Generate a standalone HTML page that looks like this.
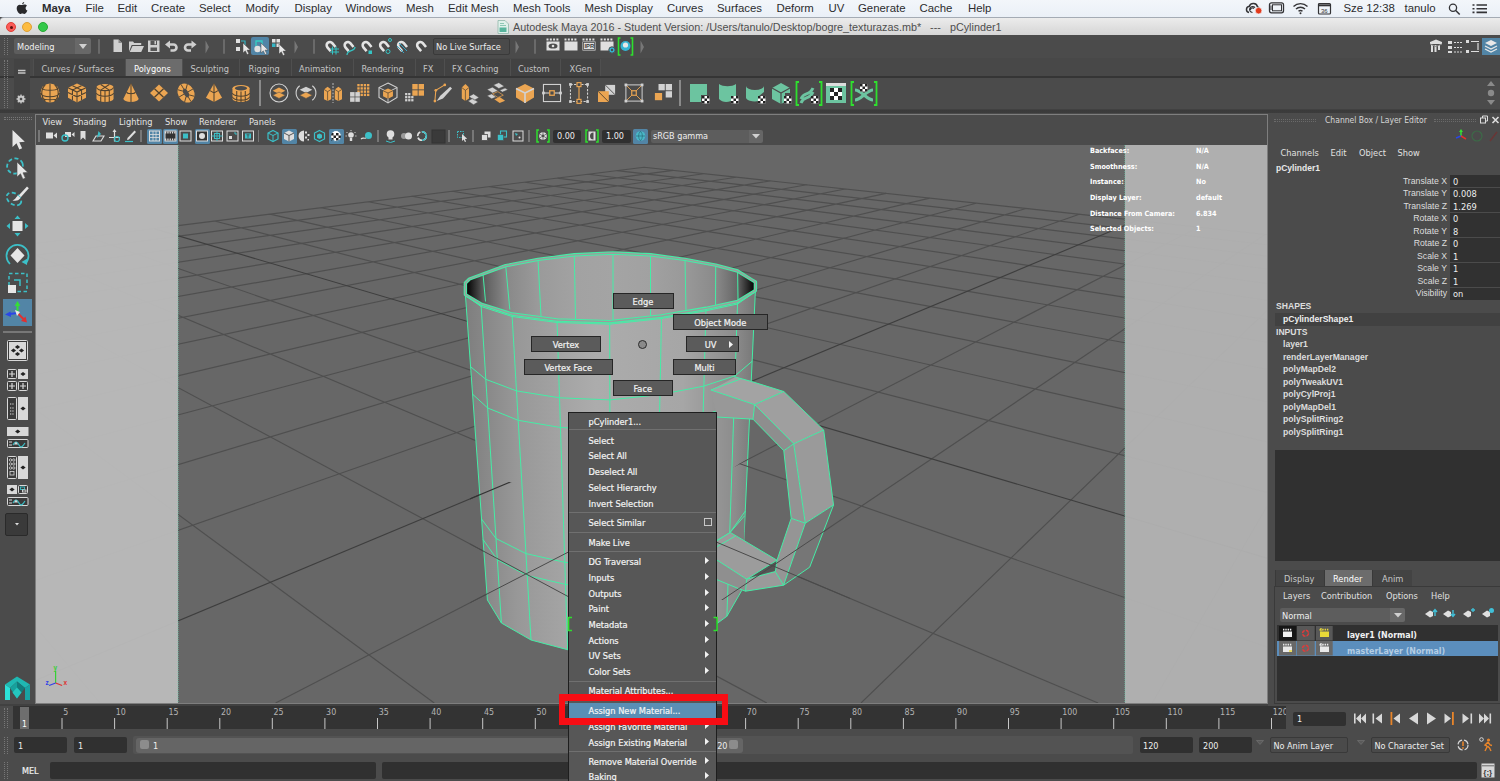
<!DOCTYPE html>
<html lang="en"><head><meta charset="utf-8"><title>Autodesk Maya 2016</title>
<style>html,body{margin:0;padding:0;}
body{width:1500px;height:781px;overflow:hidden;background:#4b4b4b;position:relative;font-family:"DejaVu Sans Condensed","DejaVu Sans","Liberation Sans",sans-serif;font-size:9.2px;color:#d8d8d8;}
.a{position:absolute;}
.t{position:absolute;white-space:nowrap;line-height:1;}
.mb{position:absolute;left:0;top:0;width:1500px;height:17px;background:linear-gradient(#f3f6fa,#eaf0f7);font-family:"Liberation Sans",sans-serif;font-size:11.4px;color:#2c2c2e;}
.mb .t{top:3px;}
.tb{position:absolute;left:0;top:17px;width:1500px;height:18px;background:linear-gradient(#ececec,#d5d5d5);border-top:1px solid #a4abb4;box-sizing:border-box;border-radius:4px 0 0 0;}
.dot{position:absolute;width:10px;height:10px;border-radius:50%;top:4px;box-sizing:border-box;}
svg{position:absolute;overflow:visible;}
.hl{position:absolute;background:#5285a6;}
.fld{position:absolute;background:#303030;border-radius:2px;box-sizing:border-box;}
.tab{position:absolute;top:59px;height:17px;background:#424242;border-left:1px solid #4f4f4f;box-sizing:border-box;}
.tab .t{top:5px;color:#c4c4c4;font-size:9.2px;}
.grip{position:absolute;width:2px;border-left:1px dotted #777;border-right:1px dotted #777;}
.cm{position:absolute;font-size:9.2px;color:#f4f4f4;-webkit-text-stroke:0.2px #f4f4f4;}
.mm{position:absolute;-webkit-text-stroke:0.2px #f4f4f4;background:#5b5b5b;border:1px solid #262626;box-sizing:border-box;color:#f2f2f2;font-size:9.2px;text-align:center;line-height:15px;height:16px;}
.cb{font-family:"Liberation Sans",sans-serif;}
</style></head>
<body>
<div class="mb">
<svg style="left:16px;top:2px" width="12" height="13" viewBox="0 0 12 13"><path d="M8.200 0.100c0.100 1.100-0.900 2.300-2 2.300C6 1.300 7.100 0.200 8.200 0.100zM6.200 3c0.600 0 1.300-0.600 2.400-0.600 0.900 0 1.800 0.500 2.400 1.300-2 1.200-1.700 4.100 0.400 4.900-0.500 1.300-1.700 3.300-2.900 3.300-0.800 0-1.100-0.500-2.100-0.500s-1.400 0.500-2.100 0.500C2.600 11.900 0.700 8.800 0.700 6.300c0-2.300 1.500-3.600 3-3.600 1 0 1.800 0.500 2.500 0.300z" fill="#2a2a2c"/></svg>
<span class="t" style="left:42px;font-weight:bold;">Maya</span>
<span class="t" style="left:85.5px;">File</span>
<span class="t" style="left:117.5px;">Edit</span>
<span class="t" style="left:151px;">Create</span>
<span class="t" style="left:199px;">Select</span>
<span class="t" style="left:245.5px;">Modify</span>
<span class="t" style="left:294.5px;">Display</span>
<span class="t" style="left:345.5px;">Windows</span>
<span class="t" style="left:406px;">Mesh</span>
<span class="t" style="left:448px;">Edit Mesh</span>
<span class="t" style="left:513px;">Mesh Tools</span>
<span class="t" style="left:584.5px;">Mesh Display</span>
<span class="t" style="left:667px;">Curves</span>
<span class="t" style="left:717px;">Surfaces</span>
<span class="t" style="left:776.5px;">Deform</span>
<span class="t" style="left:828.5px;">UV</span>
<span class="t" style="left:858px;">Generate</span>
<span class="t" style="left:919.5px;">Cache</span>
<span class="t" style="left:968px;">Help</span>
<span class="t" style="left:1343.5px;">Sze 12:38</span>
<span class="t" style="left:1404.5px;">tanulo</span>
<svg style="left:1244px;top:2px" width="250" height="14" viewBox="0 0 250 14" fill="none" stroke="#333336" stroke-width="1.200"><path d="M5 10.500a3.200 3.200 0 0 1 0.300-6.300a4.300 4.300 0 0 1 8.200 0.600a2.800 2.800 0 0 1 1 4.500" stroke-width="1.500"/><path d="M8.500 10.500a3 3 0 1 1 2.500-4.800M6.500 8a2 2 0 0 1 3.500-1.500" stroke-width="1.200"/><circle cx="14.600" cy="8.700" r="3.300" fill="#e23a1c" stroke="#f0f4f9" stroke-width="0.700"/><rect x="25.500" y="0.800" width="14" height="10" rx="2" stroke-width="1.300"/><rect x="28.500" y="2.800" width="9" height="6" stroke-width="1"/><path d="M27 3.500v4.500" stroke-width="1"/><path d="M49.500 4.500a10 10 0 0 1 14 0M52 7a6.500 6.500 0 0 1 9 0M54.500 9.300a3 3 0 0 1 4 0" stroke-width="1.400"/><circle cx="56.500" cy="11.300" r="1" fill="#333336" stroke="none"/><rect x="74.500" y="1.500" width="12" height="10.500" rx="1" stroke-width="1.200"/><path d="M74.500 3.300h12" stroke-width="2"/><text x="77" y="10.500" font-size="6" font-family="Liberation Sans,sans-serif" fill="#333336" stroke="none">36</text><circle cx="209" cy="5.700" r="3.600" stroke-width="1.300"/><path d="M211.700 8.400l4 4.200" stroke-width="1.500"/><path d="M228.500 3h2M228.500 6.700h2M228.500 10.400h2" stroke-width="1.600"/><path d="M232.500 3h10.500M232.500 6.700h10.500M232.500 10.400h10.500" stroke-width="1.600"/></svg>
</div>
<div class="tb">
<div class="dot" style="left:6px;background:#fc5b57;border:0.5px solid #de4037"></div><div class="a" style="left:9.500px;top:7.500px;width:3px;height:3px;border-radius:50%;background:#5d0f0b"></div>
<div class="dot" style="left:21.500px;background:#fdbc40;border:0.5px solid #dea034"></div>
<div class="dot" style="left:37.500px;background:#34c84a;border:0.5px solid #27aa35"></div>
<svg style="left:497px;top:2px" width="12" height="14" viewBox="0 0 12 14"><path d="M1 0.500h7l3.500 3.500v9.500h-10.500z" fill="#dff0ea" stroke="#8fb8aa" stroke-width="0.800"/><path d="M3 3.500h4M3 5.500h6" stroke="#8cc8b4" stroke-width="1"/><rect x="2.500" y="7.500" width="7" height="4.500" fill="#58b49c"/></svg><span class="t" style="left:513px;top:4px;font-family:'Liberation Sans',sans-serif;font-size:10.8px;color:#4e4e4e">Autodesk Maya 2016 - Student Version: /Users/tanulo/Desktop/bogre_texturazas.mb*&nbsp;&nbsp; ---&nbsp;&nbsp; pCylinder1</span>
</div>
<div class="a" style="left:0;top:35px;width:1500px;height:23px;background:#4b4b4b"></div>
<div class="grip" style="left:4px;top:38px;height:17px"></div><div class="a" style="left:14px;top:38px;width:61px;height:16px;background:#5d5d5d;border-radius:2px 0 0 2px"></div><div class="a" style="left:75px;top:38px;width:16px;height:16px;background:#686868;border-radius:0 2px 2px 0"></div><span class="t" style="left:17px;top:41.500px;color:#f0f0f0;font-size:9.2px">Modeling</span><svg style="left:79px;top:44px" width="8" height="5" viewBox="0 0 8 5"><path d="M0 0h8l-4 5z" fill="#d0d0d0"/></svg>
<div class="a" style="left:98px;top:39px;width:2px;height:15px;background:#6a6a6a;border-radius:1px"></div><svg style="left:108px;top:36px" width="100" height="22" viewBox="108 36 100 22" fill="#cfcfcf"><path d="M113.500 39.500h5l3.500 3.500v9h-8.500z"/><path d="M118.500 39.500v3.500h3.500z" fill="#8a8a8a"/><path d="M129 41.500h4l1.200 1.500h7v2h-9.500l-2.700 6.500z"/><path d="M132.500 46h11.500l-2.800 6h-11.500z"/><path d="M148 40.500h11.500v11.500h-11.500z"/><rect x="150.500" y="40.500" width="6.500" height="4.500" fill="#555"/><rect x="154.500" y="41" width="1.500" height="3.300" fill="#cfcfcf"/><rect x="150.500" y="47.500" width="6.500" height="3.500" fill="#555"/><path d="M165 44.500l5-4v2.700h3.500a4.300 4.300 0 0 1 0 8.600h-3v-2.600h3a1.700 1.700 0 0 0 0-3.400h-3.500v2.700z"/><path d="M196.500 44.500l-5-4v2.700h-3.500a4.300 4.300 0 0 0 0 8.600h3v-2.600h-3a1.700 1.700 0 0 1 0-3.400h3.500v2.700z"/></svg>
<svg style="left:204.5px;top:39.5px" width="5" height="14" viewBox="0 0 5 14"><path d="M0.500 0.500l3.500 6.500l-3.500 6.500z" fill="#777"/></svg><div class="a" style="left:223px;top:39px;width:2px;height:15px;background:#6a6a6a;border-radius:1px"></div><div class="hl" style="left:251px;top:37px;width:18px;height:18px;border-radius:2px"></div><svg style="left:232px;top:36px" width="60" height="22" viewBox="232 36 60 22"><rect x="236" y="39" width="4" height="4" fill="#e0e0e0"/><rect x="236" y="47" width="4" height="4" fill="#e0e0e0"/><path d="M241 41h4v4" stroke="#35b5c4" fill="none" stroke-width="1.200"/><path d="M243 43l0 10l2.3 -2.2l1.8 3.8l1.7 -0.8l-1.8 -3.7l3.2 0z" fill="#e8e8e8" stroke="#4b4b4b" stroke-width="0.500"/><circle cx="257.500" cy="49" r="3.200" fill="#e0e0e0"/><path d="M256 46v-5h6v4" stroke="#35d0c4" fill="none" stroke-width="1.300"/><path d="M261 43l0 10l2.3 -2.2l1.8 3.8l1.7 -0.8l-1.8 -3.7l3.2 0z" fill="#e8e8e8" stroke="#4b4b4b" stroke-width="0.500"/><rect x="272" y="39" width="3.500" height="3.500" fill="#e0e0e0"/><rect x="276.500" y="39" width="3.500" height="3.500" fill="#e0e0e0"/><rect x="272" y="43.500" width="3.500" height="3.500" fill="#35b5c4"/><rect x="276.500" y="43.500" width="3.500" height="3.500" fill="#e0e0e0"/><path d="M279 44l0 10l2.3 -2.2l1.8 3.8l1.7 -0.8l-1.8 -3.7l3.2 0z" fill="#e8e8e8" stroke="#4b4b4b" stroke-width="0.500"/></svg>
<svg style="left:294px;top:39.5px" width="5" height="14" viewBox="0 0 5 14"><path d="M0.500 0.500l3.500 6.500l-3.500 6.500z" fill="#777"/></svg><div class="a" style="left:312.5px;top:39px;width:2px;height:15px;background:#6a6a6a;border-radius:1px"></div><svg style="left:322px;top:36px" width="110" height="22" viewBox="322 36 110 22"><g transform="translate(330.5 46) rotate(-40)"><path d="M-4.500 4v-5a4.500 4.500 0 0 1 9 0v5h-2.600v-5a1.900 1.900 0 0 0-3.800 0v5z" fill="#e4e4e4"/></g><path d="M330 49h9M330 52h9M332.500 46.500v8M336 46.500v8" stroke="#35c4c4" stroke-width="1"/><g transform="translate(348.5 46) rotate(-40)"><path d="M-4.500 4v-5a4.500 4.500 0 0 1 9 0v5h-2.600v-5a1.900 1.900 0 0 0-3.800 0v5z" fill="#e4e4e4"/></g><path d="M347 55c0-6 8-3 8-8" stroke="#35c4c4" stroke-width="1.300" fill="none"/><g transform="translate(366.5 46) rotate(-40)"><path d="M-4.500 4v-5a4.500 4.500 0 0 1 9 0v5h-2.600v-5a1.900 1.900 0 0 0-3.800 0v5z" fill="#e4e4e4"/></g><rect x="368.500" y="50.500" width="3.500" height="3.500" fill="#35c4c4"/><g transform="translate(384 46) rotate(-40)"><path d="M-4.500 4v-5a4.500 4.500 0 0 1 9 0v5h-2.600v-5a1.900 1.900 0 0 0-3.800 0v5z" fill="#e4e4e4"/></g><circle cx="388" cy="51.500" r="2" fill="none" stroke="#35c4c4"/><circle cx="390" cy="40" r="1.500" fill="none" stroke="#35c4c4"/><g transform="translate(402 46) rotate(-40)"><path d="M-4.500 4v-5a4.500 4.500 0 0 1 9 0v5h-2.600v-5a1.900 1.900 0 0 0-3.800 0v5z" fill="#e4e4e4"/></g><path d="M399 43l8 8M397 46l7 7" stroke="#35a4c4" stroke-width="1"/><g transform="translate(421 46) rotate(-40)"><path d="M-4.500 4v-5a4.500 4.500 0 0 1 9 0v5h-2.600v-5a1.900 1.900 0 0 0-3.800 0v5z" fill="#e4e4e4"/></g></svg>
<div class="a" style="left:432.500px;top:38px;width:77px;height:17px;background:#4a4a4a;border:1px solid #3a3a3a;box-sizing:border-box;border-radius:2px"></div><span class="t" style="left:436px;top:42px;color:#eee;font-size:9.2px">No Live Surface</span>
<svg style="left:515px;top:39.5px" width="5" height="14" viewBox="0 0 5 14"><path d="M0.500 0.500l3.500 6.500l-3.500 6.500z" fill="#777"/></svg><div class="a" style="left:534px;top:39px;width:2px;height:15px;background:#6a6a6a;border-radius:1px"></div><svg style="left:544px;top:36px" width="100" height="22" viewBox="544 36 100 22"><rect x="546.5" y="41.500" width="13" height="9" fill="#e0e0e0"/><path d="M546.5 39.500h13" stroke="#e0e0e0" stroke-width="2.200" stroke-dasharray="2 1.300"/><ellipse cx="553" cy="46" rx="4.500" ry="2.600" fill="#4b4b4b"/><circle cx="553" cy="46" r="1.300" fill="#e0e0e0"/><rect x="564.5" y="41.500" width="13" height="9" fill="#e0e0e0"/><path d="M564.5 39.500h13" stroke="#e0e0e0" stroke-width="2.200" stroke-dasharray="2 1.300"/><rect x="582.5" y="41.500" width="13" height="9" fill="#e0e0e0"/><path d="M582.5 39.500h13" stroke="#e0e0e0" stroke-width="2.200" stroke-dasharray="2 1.300"/><rect x="583.500" y="42.500" width="11" height="7" fill="none" stroke="#4b4b4b" stroke-width="0.800"/><text x="584.500" y="48.300" font-size="5.800" font-family="Liberation Sans,sans-serif" font-weight="bold" fill="#3a3a3a">IPR</text><rect x="600.5" y="41.500" width="13" height="9" fill="#e0e0e0"/><path d="M600.5 39.500h13" stroke="#e0e0e0" stroke-width="2.200" stroke-dasharray="2 1.300"/><circle cx="612" cy="50" r="3.200" fill="#35b5d4" stroke="#4b4b4b"/><circle cx="612" cy="50" r="1.200" fill="#4b4b4b"/><path d="M620.500 38h-2v17h2M630.500 38h2v17h-2" stroke="#2ee02e" stroke-width="1.600" fill="none"/><circle cx="625.500" cy="46" r="5" fill="#35b5d4"/><circle cx="625.500" cy="45" r="2.600" fill="#e8e8e8"/></svg>
<svg style="left:640px;top:39.5px" width="5" height="14" viewBox="0 0 5 14"><path d="M0.500 0.500l3.500 6.500l-3.500 6.500z" fill="#777"/></svg><div class="hl" style="left:1482px;top:38px;width:18px;height:17px"></div><svg style="left:1426px;top:36px" width="74" height="22" viewBox="1426 36 74 22" fill="#dcdcdc"><path d="M1430 42l6-2.500 6 2.500v2h-12zM1431 45h2v7h-2zM1434.500 45h2v7h-2zM1438 45h2v5h-2z"/><path d="M1430 44l6 2.500 6-2.500" stroke="#888" fill="none"/><path d="M1448 41h4v3h-4zM1448 46h4v3h-4zM1448 51h4v2h-4z"/><path d="M1454 42.500h8M1454 47.500h8M1454 52h8" stroke="#dcdcdc" stroke-dasharray="2 1"/><path d="M1466 40h3v3h-3zM1466 50h3v3h-3z"/><path d="M1471 41.500h8M1471 51.500h8M1478 43v7" stroke="#dcdcdc" stroke-width="1.200" fill="none"/><path d="M1491 40l6 3-6 3-6-3z" fill="#e8e8e8"/><path d="M1485 46l6 3 6-3M1485 49l6 3 6-3" stroke="#e8e8e8" fill="none" stroke-width="1.200"/></svg>
<div class="a" style="left:0;top:58px;width:1500px;height:19px;background:#484848"></div><div class="a" style="left:0;top:76px;width:1500px;height:1.500px;background:#353535"></div><div class="a" style="left:0;top:108.500px;width:1500px;height:4.500px;background:linear-gradient(#444,#3a3a3a 40%,#3c3c3c)"></div><div class="grip" style="left:4px;top:60px;height:48px"></div><div class="tab" style="left:33px;width:92px;"><span class="t" style="left:7.5px;">Curves / Surfaces</span></div>
<div class="tab" style="left:125px;width:57px;background:#6c6c6c;"><span class="t" style="left:8px;color:#fff;">Polygons</span></div>
<div class="tab" style="left:182px;width:57px;"><span class="t" style="left:7.5px;">Sculpting</span></div>
<div class="tab" style="left:239px;width:52px;"><span class="t" style="left:8.5px;">Rigging</span></div>
<div class="tab" style="left:291px;width:62px;"><span class="t" style="left:7px;">Animation</span></div>
<div class="tab" style="left:353px;width:62px;"><span class="t" style="left:7.5px;">Rendering</span></div>
<div class="tab" style="left:415px;width:29px;"><span class="t" style="left:7px;">FX</span></div>
<div class="tab" style="left:444px;width:66px;"><span class="t" style="left:7px;">FX Caching</span></div>
<div class="tab" style="left:510px;width:50px;"><span class="t" style="left:7px;">Custom</span></div>
<div class="tab" style="left:560px;width:40px;"><span class="t" style="left:8.5px;">XGen</span></div>
<div class="a" style="left:600px;top:59px;width:1px;height:17px;background:#4f4f4f"></div><div class="a" style="left:14px;top:59px;width:16px;height:50px;background:#434343"></div><svg style="left:14px;top:60px" width="16" height="48" viewBox="14 60 16 48"><path d="M18 70.500h7.500M18 73h7.500" stroke="#c8c8c8" stroke-width="1.600"/><circle cx="21" cy="99" r="2.700" fill="none" stroke="#c8c8c8" stroke-width="1.600"/><path d="M21 94.500v9M16.500 99h9M17.800 95.800l6.400 6.400M24.200 95.800l-6.400 6.400" stroke="#c8c8c8" stroke-width="1.300"/><circle cx="21" cy="99" r="1.300" fill="#4b4b4b"/></svg>
<svg style="left:1485px;top:80px" width="12" height="28" viewBox="0 0 12 28" fill="#8a8a8a"><path d="M6 1l4 5h-8z"/><circle cx="6" cy="13" r="3.200"/><path d="M6 25l4-5h-8z"/></svg>
<svg style="left:37.5px;top:81px" width="24" height="24" viewBox="-12 -12 24 24"><g transform="scale(0.95)"><circle r="10" fill="#eba552"/><path d="M-10 0a10 4 0 0 0 20 0M-8.600-5a9 3 0 0 0 17.200 0M-8.600 5a9 3 0 0 0 17.200 0M0-10v20M-5-8.600a12 12 0 0 0 0 17.200M5-8.600a12 12 0 0 1 0 17.200" stroke="#50422f" fill="none" stroke-width="1.100"/></g></svg>
<svg style="left:64.5px;top:81px" width="24" height="24" viewBox="-12 -12 24 24"><g transform="scale(0.95)"><path d="M0-10l9.500 4.500v10.500l-9.500 5l-9.500-5v-10.500z" fill="#eba552"/><path d="M-9.500-5.500l9.500 4.500l9.500-4.500M0-1v11M-9.500-0.500l9.500 4.500 9.500-4.500M-4.700-7.700l9.500 4.500v10.500M4.700-7.700l-9.500 4.500v10.500" stroke="#50422f" fill="none" stroke-width="1.100"/></g></svg>
<svg style="left:92.5px;top:81px" width="24" height="24" viewBox="-12 -12 24 24"><g transform="scale(0.95)"><path d="M-9-6a9 3.500 0 0 1 18 0v12a9 3.500 0 0 1-18 0z" fill="#eba552"/><path d="M-9-6a9 3.500 0 0 0 18 0M-9 0a9 3.500 0 0 0 18 0M-4.500-3v12.500M4.500-3v12.500M0-2.500v12M-4.500-9l9 6M4.500-9l-9 6" stroke="#50422f" fill="none" stroke-width="1.100"/></g></svg>
<svg style="left:119px;top:81px" width="24" height="24" viewBox="-12 -12 24 24"><g transform="scale(0.95)"><path d="M0-10l8 16a8 3.500 0 0 1-16 0z" fill="#eba552"/><path d="M0-10v19.500M-4.500-1a4.500 1.800 0 0 0 9 0" stroke="#50422f" fill="none" stroke-width="1.100"/></g></svg>
<svg style="left:146.5px;top:81px" width="24" height="24" viewBox="-12 -12 24 24"><g transform="scale(0.95)"><path d="M0-9l9.500 9-9.500 9-9.500-9z" fill="#eba552"/><path d="M-4.750-4.500l9.500 9M4.750-4.500l-9.500 9" stroke="#50422f" fill="none" stroke-width="1.300"/></g></svg>
<svg style="left:174px;top:81px" width="24" height="24" viewBox="-12 -12 24 24"><g transform="scale(0.95)"><g transform="rotate(-30)"><ellipse rx="8.500" ry="10.500" fill="#eba552"/><ellipse rx="2.500" ry="5" fill="#4b4b4b"/><path d="M-8.500 0h6M2.500 0h6M0-10.500v5.500M0 5v5.500M-6-7.500l4 4M6-7.500l-4 4M-6 7.500l4-4M6 7.500l-4-4" stroke="#50422f" stroke-width="0.900"/></g></g></svg>
<svg style="left:201.5px;top:81px" width="24" height="24" viewBox="-12 -12 24 24"><g transform="scale(0.95)"><path d="M0-10l8.500 15-8.500 4.500-8.500-4.500z" fill="#eba552"/><path d="M0-10v19.500M-4.200-2.500l4.200 2.500 4.200-2.500" stroke="#50422f" fill="none" stroke-width="1.100"/></g></svg>
<svg style="left:229px;top:81px" width="24" height="24" viewBox="-12 -12 24 24"><g transform="scale(0.95)"><path d="M-9-5a9 3.500 0 0 1 18 0v11a9 3.500 0 0 1-18 0z" fill="#eba552"/><ellipse cy="-5" rx="6.500" ry="2.300" fill="#4b4b4b"/><path d="M-9 0a9 3.500 0 0 0 18 0M-9 4a9 3.500 0 0 0 18 0M-4.500-2v11.500M4.500-2v11.500M0-1.500v11" stroke="#50422f" fill="none" stroke-width="1.100"/></g></svg>
<div class="a" style="left:259px;top:80px;width:2px;height:26px;background:#8a8a8a"></div><svg style="left:266.5px;top:81px" width="24" height="24" viewBox="-12 -12 24 24"><g transform="scale(0.9)"><circle r="10" fill="none" stroke="#d2d2d2" stroke-width="1.200"/><path d="M0-6l7 3.500-7 3.500-7-3.500z" fill="#eba552"/><path d="M0-1l7 3.500-7 3.500-7-3.500z" fill="#eba552" stroke="#4b4b4b" stroke-width="0.600"/></g></svg>
<svg style="left:293.5px;top:81px" width="24" height="24" viewBox="-12 -12 24 24"><g transform="scale(0.9)"><path d="M-7-8a10 10 0 0 0 0 16M7-8a10 10 0 0 1 0 16" fill="none" stroke="#d2d2d2" stroke-width="1.200"/><path d="M0-7l7 3.500-7 3.500-7-3.500z" fill="#d2d2d2"/><path d="M0-1l7 3.500-7 3.500-7-3.500z" fill="#eba552" stroke="#4b4b4b" stroke-width="0.600"/></g></svg>
<svg style="left:320.5px;top:81px" width="24" height="24" viewBox="-12 -12 24 24"><g transform="scale(0.9)"><path d="M-10-4l4-3 4 3v11l-4 2-4-2zM2-4l4-3 4 3v11l-4 2-4-2z" fill="#eba552"/><path d="M-10-4l4 2.500 4-2.500M-6-1.500v10M2-4l4 2.500 4-2.500M6-1.500v10" stroke="#50422f" fill="none" stroke-width="0.800"/><path d="M0-11v22" stroke="#d2d2d2" stroke-dasharray="2 1.500"/></g></svg>
<svg style="left:347.5px;top:81px" width="24" height="24" viewBox="-12 -12 24 24"><g transform="scale(0.9)"><g fill="#eba552"><rect x="-3" y="-10" width="2.600" height="2.600"/><rect x="-3" y="-6.4" width="2.600" height="2.600"/><rect x="-3" y="-2.8" width="2.600" height="2.600"/><rect x="-3" y="0.8" width="2.600" height="2.600"/><rect x="0.6" y="-10" width="2.600" height="2.600"/><rect x="0.6" y="-6.4" width="2.600" height="2.600"/><rect x="0.6" y="-2.8" width="2.600" height="2.600"/><rect x="0.6" y="0.8" width="2.600" height="2.600"/><rect x="4.2" y="-10" width="2.600" height="2.600"/><rect x="4.2" y="-6.4" width="2.600" height="2.600"/><rect x="4.2" y="-2.8" width="2.600" height="2.600"/><rect x="4.2" y="0.8" width="2.600" height="2.600"/><rect x="7.8" y="-10" width="2.600" height="2.600"/><rect x="7.8" y="-6.4" width="2.600" height="2.600"/><rect x="7.8" y="-2.8" width="2.600" height="2.600"/><rect x="7.8" y="0.8" width="2.600" height="2.600"/></g><g fill="#d2d2d2"><rect x="-11" y="-1" width="5" height="5"/><rect x="-11" y="4.8" width="5" height="5"/><rect x="-5.2" y="-1" width="5" height="5"/><rect x="-5.2" y="4.8" width="5" height="5"/></g></g></svg>
<svg style="left:375.5px;top:81px" width="24" height="24" viewBox="-12 -12 24 24"><g transform="scale(0.9)"><path d="M0-11l10 5v11l-10 6l-10-6v-11z" fill="none" stroke="#d2d2d2" stroke-width="1.200"/><path d="M0-1l10-5M0-1l-10-5M0-1v12" stroke="#d2d2d2" stroke-width="1"/><path d="M0-5l5.500 2.500v6l-5.500 3-5.500-3v-6z" fill="#eba552"/><path d="M-5.500-2.500l5.500 2.500 5.500-2.500M0 0v6.500" stroke="#50422f" fill="none" stroke-width="0.800"/></g></svg>
<svg style="left:402.5px;top:81px" width="24" height="24" viewBox="-12 -12 24 24"><g transform="scale(0.9)"><g fill="#eba552"><rect x="-3" y="-10" width="6" height="6"/><rect x="4" y="-10" width="6" height="6"/><rect x="-3" y="-3" width="6" height="6"/><rect x="4" y="-3" width="6" height="6"/></g><g fill="#d2d2d2"><rect x="-11" y="0" width="2.500" height="2.500"/><rect x="-11" y="3.4" width="2.500" height="2.500"/><rect x="-11" y="6.8" width="2.500" height="2.500"/><rect x="-7.6" y="0" width="2.500" height="2.500"/><rect x="-7.6" y="3.4" width="2.500" height="2.500"/><rect x="-7.6" y="6.8" width="2.500" height="2.500"/><rect x="-4.2" y="3.4" width="2.500" height="2.500"/><rect x="-4.2" y="6.8" width="2.500" height="2.500"/></g></g></svg>
<svg style="left:430.5px;top:81px" width="24" height="24" viewBox="-12 -12 24 24"><g transform="scale(0.9)"><path d="M-9 9l1-12 10-6" fill="none" stroke="#eba552" stroke-width="1.200"/><circle cx="-8" cy="-3" r="1.500" fill="#eba552"/><circle cx="2" cy="-9" r="1.500" fill="#eba552"/><circle cx="-9" cy="9" r="1.500" fill="#eba552"/><path d="M-7 9l4-6 11-10 2 2-10 11z" fill="#d2d2d2"/></g></svg>
<svg style="left:457px;top:81px" width="24" height="24" viewBox="-12 -12 24 24"><g transform="scale(0.9)"><path d="M-8-6l4-4 4 4v12l-4 3-4-3z" fill="#eba552"/><path d="M-8-6l4 3 4-3M-4-3v12" stroke="#50422f" fill="none" stroke-width="0.800"/><path d="M0 4l5-3 6 4-5 3zM-1 9l5-3 6 4-5 3z" fill="#d2d2d2" stroke="#4b4b4b" stroke-width="0.500"/></g></svg>
<svg style="left:485px;top:81px" width="24" height="24" viewBox="-12 -12 24 24"><g transform="scale(0.9)"><path d="M-4-9l6-2.500 6 4-6 2.500zM-11-4l6-2.500 6 4-6 2.500zM3-3l6-2.500 3 2-6 2.500z" fill="#d2d2d2" stroke="#4b4b4b" stroke-width="0.500"/><path d="M-5 1l6-2.500 6 4-6 2.500z" fill="#4b4b4b" stroke="#eba552" stroke-width="0.800"/><path d="M-3 7l6-2.500 6 4-6 2.500z" fill="#eba552"/><path d="M-11 3l5-2 5 3.500-5 2z" fill="#d2d2d2" stroke="#4b4b4b" stroke-width="0.500"/></g></svg>
<svg style="left:512.5px;top:81px" width="24" height="24" viewBox="-12 -12 24 24"><g transform="scale(0.9)"><path d="M0-10l10 5v10l-10 6l-10-6v-10z" fill="#eba552"/><path d="M0 0l10-5M0 0l-10-5M0 0v11" stroke="#d2d2d2" stroke-width="1.800"/></g></svg>
<svg style="left:539.5px;top:81px" width="24" height="24" viewBox="-12 -12 24 24"><g transform="scale(0.9)"><rect x="-9.500" y="-9.500" width="19" height="19" fill="none" stroke="#d2d2d2" stroke-width="1.200"/><path d="M-9.500 0h19" stroke="#d2d2d2" stroke-width="1.200"/><rect x="-11" y="-1.500" width="3" height="3" fill="#d2d2d2"/><rect x="8" y="-1.500" width="3" height="3" fill="#d2d2d2"/><rect x="-2.500" y="-2.500" width="5" height="5" fill="#4b4b4b" stroke="#eba552" stroke-width="1.400"/></g></svg>
<svg style="left:567px;top:81px" width="24" height="24" viewBox="-12 -12 24 24"><g transform="scale(0.9)"><rect x="-9.500" y="-9.500" width="19" height="19" fill="none" stroke="#d2d2d2" stroke-width="1.200" stroke-dasharray="2.500 1.500"/><path d="M0-9.500v19" stroke="#eba552" stroke-width="1.300"/><g fill="#d2d2d2"><rect x="-11" y="-11" width="3" height="3"/><rect x="8" y="-11" width="3" height="3"/><rect x="-11" y="8" width="3" height="3"/><rect x="8" y="8" width="3" height="3"/></g><rect x="-2.200" y="-11.500" width="4.400" height="4.400" fill="#4b4b4b" stroke="#eba552" stroke-width="1.300"/><rect x="-2.200" y="7.100" width="4.400" height="4.400" fill="#4b4b4b" stroke="#eba552" stroke-width="1.300"/></g></svg>
<svg style="left:595px;top:81px" width="24" height="24" viewBox="-12 -12 24 24"><g transform="scale(0.9)"><path d="M-2-9h11v11h-11z" fill="#d2d2d2"/><path d="M-2-9l11 11" stroke="#4b4b4b"/><path d="M-10-2h12v12h-12z" fill="#eba552"/><path d="M-10-2l12 12" stroke="#50422f" stroke-width="1"/></g></svg>
<svg style="left:622px;top:81px" width="24" height="24" viewBox="-12 -12 24 24"><g transform="scale(0.9)"><rect x="-9" y="-9" width="18" height="18" fill="none" stroke="#d2d2d2" stroke-width="1.100"/><path d="M-9-9l18 18M9-9l-18 18" stroke="#eba552" stroke-width="1"/><rect x="-2.500" y="-2.500" width="5" height="5" fill="#4b4b4b" stroke="#eba552" stroke-width="1.300"/><g fill="#d2d2d2"><rect x="-10.500" y="-10.500" width="3" height="3"/><rect x="7.500" y="-10.500" width="3" height="3"/><rect x="-10.500" y="7.500" width="3" height="3"/><rect x="7.500" y="7.500" width="3" height="3"/></g></g></svg>
<svg style="left:650.5px;top:81px" width="24" height="24" viewBox="-12 -12 24 24"><g transform="scale(0.9)"><g fill="#d2d2d2"><rect x="-5" y="-10" width="7" height="7"/><rect x="3" y="-10" width="7" height="7"/><rect x="3" y="-2" width="7" height="7"/></g><rect x="-9" y="0" width="8" height="8" fill="#eba552"/></g></svg>
<div class="a" style="left:679px;top:80px;width:2px;height:26px;background:#8a8a8a"></div><svg style="left:687px;top:81px" width="24" height="24" viewBox="-12 -12 24 24"><path d="M-9-9h17v11h-6v7h-11z" fill="#6cc4a0"/><g transform="translate(3 3)"><rect width="7.500" height="7.500" fill="#fff"/><path d="M0 0h2.500v2.500h-2.500zM5 0h2.500v2.500h-2.500zM2.500 2.500h2.500v2.500h-2.500zM0 5h2.500v2.500h-2.500zM5 5h2.500v2.500h-2.500z" fill="#222"/></g></svg>
<svg style="left:715.5px;top:81px" width="24" height="24" viewBox="-12 -12 24 24"><path d="M-9-9c4 3 13 3 17 0v12h-5v5c-5 2-9 1-12-2z" fill="#6cc4a0"/><g transform="translate(3 3)"><rect width="7.500" height="7.500" fill="#fff"/><path d="M0 0h2.500v2.500h-2.500zM5 0h2.500v2.500h-2.500zM2.500 2.500h2.500v2.500h-2.500zM0 5h2.500v2.500h-2.500zM5 5h2.500v2.500h-2.500z" fill="#222"/></g></svg>
<svg style="left:743px;top:81px" width="24" height="24" viewBox="-12 -12 24 24"><path d="M-9-7a9 4 0 0 0 18 0v6l-5 4v5a9 4 0 0 1-13-4z" fill="#6cc4a0"/><g transform="translate(3 3)"><rect width="7.500" height="7.500" fill="#fff"/><path d="M0 0h2.500v2.500h-2.500zM5 0h2.500v2.500h-2.500zM2.500 2.500h2.500v2.500h-2.500zM0 5h2.500v2.500h-2.500zM5 5h2.500v2.500h-2.500z" fill="#222"/></g></svg>
<svg style="left:769px;top:81px" width="24" height="24" viewBox="-12 -12 24 24"><path d="M0-10l9 5v5h-5v9l-4 2-9-5v-11z" fill="#6cc4a0"/><path d="M-9-5l9 5 9-5M0 0v11" stroke="#4b4b4b" fill="none" stroke-width="1.200"/><g transform="translate(3 3)"><rect width="7.500" height="7.500" fill="#fff"/><path d="M0 0h2.500v2.500h-2.500zM5 0h2.500v2.500h-2.500zM2.500 2.500h2.500v2.500h-2.500zM0 5h2.500v2.500h-2.500zM5 5h2.500v2.500h-2.500z" fill="#222"/></g></svg>
<svg style="left:797px;top:81px" width="24" height="24" viewBox="-12 -12 24 24"><path d="M-10-11h-2.500v23h2.500M10-11h2.500v23h-2.500" stroke="#2ee02e" stroke-width="1.800" fill="none"/><path d="M-8 6c3-8 8-2 12-11M-8 10c3-8 8-2 12-11" stroke="#6cc4a0" stroke-width="3" fill="none"/><g transform="translate(2 3)"><rect width="7.500" height="7.500" fill="#fff"/><path d="M0 0h2.500v2.500h-2.500zM5 0h2.500v2.500h-2.500zM2.500 2.500h2.500v2.500h-2.500zM0 5h2.500v2.500h-2.500zM5 5h2.500v2.500h-2.500z" fill="#222"/></g></svg>
<svg style="left:824px;top:81px" width="24" height="24" viewBox="-12 -12 24 24"><rect x="-10" y="-10" width="20" height="20" fill="#6cc4a0"/><rect x="-10" y="-10" width="20" height="3" fill="#ddd"/><g transform="translate(-6 -5)"><rect width="12" height="12" fill="#fff"/><path d="M0 0h4v4h-4zM8 0h4v4h-4zM4 4h4v4h-4zM0 8h4v4h-4zM8 8h4v4h-4z" fill="#222"/></g></svg>
<svg style="left:852px;top:81px" width="24" height="24" viewBox="-12 -12 24 24"><path d="M-10-11h-2.500v23h2.500M10-11h2.500v23h-2.500" stroke="#2ee02e" stroke-width="1.800" fill="none"/><path d="M-9-3c6 0 12 10 18 10M-9 7c6 0 12-10 18-10" stroke="#6cc4a0" stroke-width="3" fill="none"/><g transform="translate(-4 -9)"><rect width="7.500" height="7.500" fill="#fff"/><path d="M0 0h2.500v2.500h-2.500zM5 0h2.500v2.500h-2.500zM2.500 2.500h2.500v2.500h-2.500zM0 5h2.500v2.500h-2.500zM5 5h2.500v2.500h-2.500z" fill="#222"/></g></svg>
<div class="a" style="left:0;top:113px;width:35px;height:592px;background:#4b4b4b"></div><div class="a" style="left:4px;top:117px;width:28px;height:3px;border-top:1px dotted #777;border-bottom:1px dotted #777;box-sizing:border-box"></div><svg style="left:0;top:125px" width="36" height="210" viewBox="0 125 36 210"><path d="M12.500 130v17l4-3.700 2.800 6.200 2.800-1.300-2.800-6 5.500-0.400z" fill="#e6e6e6"/><ellipse cx="15" cy="166" rx="8" ry="7.500" fill="none" stroke="#3cc0c8" stroke-width="1.800" stroke-dasharray="4 2.500" transform="rotate(-25 15 166)"/><path d="M17 162v15l3.500-3.200 2.400 5.400 2.500-1.100-2.400-5.300 4.800-0.400z" fill="#e6e6e6" stroke="#4b4b4b" stroke-width="0.600"/><ellipse cx="14" cy="199" rx="8" ry="5.500" fill="none" stroke="#3cc0c8" stroke-width="1.800" stroke-dasharray="4 2.500" transform="rotate(35 14 199)"/><path d="M27 186.500l1.800 1.800-8 9-2-2z" fill="#e6e6e6"/><path d="M18 195.500l2.500 2.500c-2 3-5 3-8 2.500 3-1 3-3 5.500-5z" fill="#e6e6e6"/><rect x="12.500" y="221" width="10" height="10" fill="#e6e6e6"/><path d="M17.500 215.500l3 3.500h-6zM17.500 236.500l3-3.500h-6zM6.500 226l3.500-3v6zM28.500 226l-3.500-3v6z" fill="#3cc0c8"/><path d="M17.500 248l7 7.500-7 7.500-7-7.500z" fill="#e6e6e6"/><path d="M10 264a11 11 0 1 1 15.500-0.500" fill="none" stroke="#3cc0c8" stroke-width="1.700"/><path d="M27.500 258.500l-0.500 6.500-5.500-3z" fill="#3cc0c8"/><rect x="9" y="273.500" width="18" height="18" fill="none" stroke="#3cc0c8" stroke-width="1.500" stroke-dasharray="3.500 2.500"/><rect x="8" y="285" width="8" height="8" fill="#e6e6e6"/><path d="M14 280h6v6" fill="none" stroke="#3cc0c8" stroke-width="1.500"/></svg>
<div class="hl" style="left:3px;top:299px;width:29px;height:27px"></div><svg style="left:3px;top:299px" width="29" height="27" viewBox="0 0 29 27"><path d="M14.500 14v-8" stroke="#35e035" stroke-width="2"/><path d="M14.500 2l2.800 5h-5.600z" fill="#35e035"/><path d="M14.500 14l-8 1" stroke="#2a46e8" stroke-width="2"/><path d="M2 15.500l5.500-3 0.500 5.500z" fill="#2a46e8"/><path d="M14.500 14l6 6" stroke="#e03030" stroke-width="2"/><path d="M24 23.500l-6-1.500 4.500-4.500z" fill="#e03030"/><path d="M12 11l5 2-3 4z" fill="#e8e8e8"/></svg>
<div class="a" style="left:3px;top:331px;width:29px;height:2px;background:#777"></div><svg style="left:6.5px;top:340px" width="21" height="21" viewBox="0 0 21 21"><rect x="0.500" y="0.500" width="20" height="20" rx="1" fill="#3a3a3a" stroke="#d8d8d8" stroke-width="1"/><rect x="2" y="2" width="17" height="17" fill="#d8d8d8"/><path d="M10.5 5.05l2.6 1.95l-2.6 1.95l-2.6 -1.95z" fill="#222"/><path d="M10.5 12.05l2.6 1.95l-2.6 1.95l-2.6 -1.95z" fill="#222"/><path d="M6.5 8.55l2.6 1.95l-2.6 1.95l-2.6 -1.95z" fill="#222"/><path d="M14.5 8.55l2.6 1.95l-2.6 1.95l-2.6 -1.95z" fill="#222"/></svg><svg style="left:6.5px;top:368.5px" width="10" height="10" viewBox="0 0 10 10"><rect x="0.500" y="0.500" width="9" height="9" rx="1" fill="#3a3a3a" stroke="#d8d8d8" stroke-width="1"/><path d="M2 5h6M5 2v6" stroke="#d8d8d8" stroke-width="1.200"/></svg><svg style="left:18px;top:368.500px" width="10" height="10"><rect width="10" height="10" fill="#d8d8d8"/><path d="M5 3.05l2.6 1.95l-2.6 1.95l-2.6 -1.95z" fill="#222"/></svg><svg style="left:6.5px;top:380.5px" width="10" height="10" viewBox="0 0 10 10"><rect x="0.500" y="0.500" width="9" height="9" rx="1" fill="#3a3a3a" stroke="#d8d8d8" stroke-width="1"/><path d="M2 5h6M5 2v6" stroke="#d8d8d8" stroke-width="1.200"/></svg><svg style="left:18px;top:380.5px" width="10" height="10" viewBox="0 0 10 10"><rect x="0.500" y="0.500" width="9" height="9" rx="1" fill="#3a3a3a" stroke="#d8d8d8" stroke-width="1"/><path d="M2 5h6M5 2v6" stroke="#d8d8d8" stroke-width="1.200"/></svg><svg style="left:6.5px;top:397px" width="10" height="23" viewBox="0 0 10 23"><rect x="0.500" y="0.500" width="9" height="22" rx="1" fill="#3a3a3a" stroke="#d8d8d8" stroke-width="1"/><path d="M3 7h4M3 11h4M3 14h4M3 17h4" stroke="#d8d8d8" stroke-dasharray="1 0.700"/></svg><svg style="left:18px;top:397px" width="10" height="23"><rect width="10" height="23" fill="#d8d8d8"/><path d="M5 9.55l2.6 1.95l-2.6 1.95l-2.6 -1.95z" fill="#222"/></svg><svg style="left:6.500px;top:427px" width="21.500" height="9"><rect width="21.500" height="9" fill="#d8d8d8"/><path d="M10.7 2.55l2.6 1.95l-2.6 1.95l-2.6 -1.95z" fill="#222"/></svg><svg style="left:6.5px;top:439px" width="21.5" height="9" viewBox="0 0 21.5 9"><rect x="0.500" y="0.500" width="20.5" height="8" rx="1" fill="#3a3a3a" stroke="#d8d8d8" stroke-width="1"/><path d="M2 3h3M2 6h3" stroke="#d8d8d8"/><path d="M6 6c2-4 4-4 6 0s4 1 6-2" fill="none" stroke="#3cc0c8" stroke-width="1.200"/><path d="M9 2.500l2 3h-4z" fill="#d8d8d8"/></svg><svg style="left:6.5px;top:455.5px" width="10" height="23" viewBox="0 0 10 23"><rect x="0.500" y="0.500" width="9" height="22" rx="1" fill="#3a3a3a" stroke="#d8d8d8" stroke-width="1"/><g fill="none" stroke="#d8d8d8" stroke-width="0.800"><circle cx="3.500" cy="4" r="1.200"/><circle cx="6.800" cy="4" r="1.200"/><circle cx="3.500" cy="8" r="1.200"/><circle cx="6.800" cy="8" r="1.200"/><circle cx="3.500" cy="12" r="1.200"/><circle cx="6.800" cy="12" r="1.200"/><rect x="3" y="15.500" width="4" height="3.500"/></g></svg><svg style="left:18px;top:455.500px" width="10" height="23"><rect width="10" height="23" fill="#d8d8d8"/><path d="M5 9.55l2.6 1.95l-2.6 1.95l-2.6 -1.95z" fill="#222"/></svg><svg style="left:6.500px;top:485px" width="10" height="9"><rect width="10" height="9" fill="#d8d8d8"/><path d="M5 2.55l2.6 1.95l-2.6 1.95l-2.6 -1.95z" fill="#222"/></svg><svg style="left:18px;top:485px" width="10" height="9" viewBox="0 0 10 9"><rect x="0.500" y="0.500" width="9" height="8" rx="1" fill="#3a3a3a" stroke="#d8d8d8" stroke-width="1"/><rect x="2.500" y="2" width="4" height="2.500" fill="none" stroke="#3cc0c8" stroke-width="0.900"/><rect x="4.500" y="5" width="3.500" height="2" fill="none" stroke="#d8d8d8" stroke-width="0.900"/></svg><svg style="left:6.5px;top:497px" width="21.5" height="9" viewBox="0 0 21.5 9"><rect x="0.500" y="0.500" width="20.5" height="8" rx="1" fill="#3a3a3a" stroke="#d8d8d8" stroke-width="1"/><path d="M2 3h3M2 6h3" stroke="#d8d8d8"/><path d="M6 6c2-4 4-4 6 0s4 1 6-2" fill="none" stroke="#3cc0c8" stroke-width="1.200"/><path d="M9 2.500l2 3h-4z" fill="#d8d8d8"/></svg><div class="a" style="left:5px;top:512.500px;width:23px;height:23px;background:#3a3a3a;border:1px solid #2a2a2a;box-sizing:border-box;border-radius:2px"></div><svg style="left:14.500px;top:522.500px" width="4" height="3"><path d="M0 0h4l-2 2.500z" fill="#ddd"/></svg>
<svg style="left:0;top:670px" width="36" height="34" viewBox="0 670 36 34"><polygon points="5,684.500 17,676.500 30,684.500 25,688 17,681.500 10,688" fill="#1fb8b2"/><polygon points="5,684.500 10,688 10,700 5,700" fill="#2ce0d8"/><polygon points="30,684.500 25,688 25,700 30,700" fill="#18a3a3"/><polygon points="17,681.500 17,698.500 10,688" fill="#17a09c"/><polygon points="17,681.500 25,688 17,698.500" fill="#117c7c"/><polygon points="17,687.500 21.500,692.500 17,698.500 12.500,692.500" fill="#25c6be"/></svg>
<div class="a" style="left:35px;top:113.500px;width:1233px;height:590.500px;background:#4b4b4b;border:1px solid #7e7e7e;box-sizing:border-box"></div><span class="t" style="left:42.5px;top:117px;color:#e4e4e4;font-size:9.2px">View</span><span class="t" style="left:73px;top:117px;color:#e4e4e4;font-size:9.2px">Shading</span><span class="t" style="left:119px;top:117px;color:#e4e4e4;font-size:9.2px">Lighting</span><span class="t" style="left:165px;top:117px;color:#e4e4e4;font-size:9.2px">Show</span><span class="t" style="left:199px;top:117px;color:#e4e4e4;font-size:9.2px">Renderer</span><span class="t" style="left:249px;top:117px;color:#e4e4e4;font-size:9.2px">Panels</span>
<div class="hl" style="left:147px;top:128.500px;width:15px;height:15px;border-radius:1.500px"></div><div class="hl" style="left:163px;top:128.500px;width:15px;height:15px;border-radius:1.500px"></div><div class="hl" style="left:194.5px;top:128.500px;width:15px;height:15px;border-radius:1.500px"></div><div class="hl" style="left:281.5px;top:128.500px;width:15px;height:15px;border-radius:1.500px"></div><div class="hl" style="left:328.5px;top:128.500px;width:15px;height:15px;border-radius:1.500px"></div><div class="hl" style="left:633px;top:128.500px;width:15px;height:15px;border-radius:1.500px"></div><div class="a" style="left:38.3px;top:130px;width:1.500px;height:12px;background:#777"></div><div class="a" style="left:140.3px;top:130px;width:1.500px;height:12px;background:#777"></div><div class="a" style="left:257.8px;top:130px;width:1.500px;height:12px;background:#777"></div><div class="a" style="left:377.3px;top:130px;width:1.500px;height:12px;background:#777"></div><div class="a" style="left:448.3px;top:130px;width:1.500px;height:12px;background:#777"></div><div class="a" style="left:472.3px;top:130px;width:1.500px;height:12px;background:#777"></div><div class="a" style="left:528.3px;top:130px;width:1.500px;height:12px;background:#777"></div><svg style="left:37px;top:128px" width="730" height="17" viewBox="37 128 730 17"><rect x="46" y="132.500" width="7" height="6" fill="#dedede"/><path d="M53.500 135.500l3.500-3v6z" fill="#dedede"/><rect x="65" y="132" width="6" height="5" fill="#dedede"/><path d="M71.500 134.500l3-2.500v5z" fill="#dedede"/><circle cx="65" cy="138" r="3" fill="none" stroke="#3cc0c8" stroke-width="1.400"/><path d="M80.500 131h5v9l-2.500-2.500-2.500 2.500z" fill="#dedede"/><path d="M93 141l3-5h8l-3 5z" fill="none" stroke="#dedede" stroke-width="1.100"/><path d="M97 138l1.500-7 2.500 3z" fill="#3cc0c8"/><path d="M114.500 130.500v11M109 137.500h11" stroke="#dedede" stroke-width="1.200"/><circle cx="117" cy="139" r="2.500" fill="none" stroke="#3cc0c8" stroke-width="1.200"/><path d="M114.500 129l2 3h-4z" fill="#dedede"/><path d="M134.500 130.500l1.500 1.500-7 7.500-2 0.500 0.500-2z" fill="#dedede"/><path d="M125 141.500h8" stroke="#3cc0c8" stroke-width="1.200"/><rect x="149.500" y="131" width="10" height="10" fill="none" stroke="#dedede" stroke-width="1"/><path d="M153 131v10M156 131v10M149.500 134.500h10M149.500 137.500h10" stroke="#dedede" stroke-width="0.800"/><rect x="165" y="131" width="11" height="10" fill="#333" stroke="#dedede" stroke-width="1"/><path d="M165 132.500h11M165 139.500h11" stroke="#dedede" stroke-width="1.800" stroke-dasharray="1.300 1"/><rect x="180" y="131" width="11" height="10" fill="none" stroke="#dedede" stroke-width="1"/><rect x="183" y="133.500" width="5" height="5" fill="#3cc0c8"/><rect x="196.500" y="131" width="11" height="10" fill="#333" stroke="#dedede" stroke-width="1"/><circle cx="202" cy="136" r="3" fill="#dedede"/><rect x="211.500" y="131" width="11" height="10" fill="none" stroke="#dedede" stroke-width="1"/><path d="M217 131v10M211.500 136h11" stroke="#3cc0c8" stroke-width="0.900"/><rect x="214.500" y="133.500" width="5" height="5" fill="none" stroke="#3cc0c8"/><rect x="227" y="131" width="11" height="10" fill="none" stroke="#dedede" stroke-width="1"/><rect x="229" y="136" width="3" height="3" fill="#dedede"/><path d="M234 133h2v2" stroke="#3cc0c8" fill="none"/><rect x="242.500" y="131" width="11" height="10" fill="none" stroke="#dedede" stroke-width="1"/><rect x="245" y="133.500" width="6" height="5" fill="#3cc0c8"/><path d="M246.500 134.800h3M248 134.800v3" stroke="#4b4b4b" stroke-width="0.900"/><path d="M273 130.500l5 2.500v6l-5 2.500-5-2.500v-6z" fill="none" stroke="#3cc0c8" stroke-width="1.200"/><path d="M268 133l5 2.500 5-2.500M273 135.500v6" stroke="#3cc0c8" stroke-width="1" fill="none"/><path d="M289 130.500l5 2.500v6l-5 2.500-5-2.500v-6z" fill="#dedede"/><path d="M284 133l5 2.500 5-2.500M289 135.500v6" stroke="#555" stroke-width="1" fill="none"/><path d="M304 130.500a5.500 5.500 0 0 0 0 11z" fill="#dedede"/><g fill="#dedede"><rect x="305" y="131.500" width="2" height="2"/><rect x="307.500" y="134" width="2" height="2"/><rect x="305" y="136.500" width="2" height="2"/><rect x="307.500" y="139" width="1.500" height="1.500"/></g><path d="M319.500 130.500l5 2.500v6l-5 2.500-5-2.500v-6z" fill="none" stroke="#3cc0c8" stroke-width="1.200"/><path d="M319.500 133.500l2.500 1.300v3l-2.500 1.300-2.500-1.300v-3z" fill="#3cc0c8"/><circle cx="336" cy="136" r="5.500" fill="#fff"/><path d="M331 133h2.500v2.500h-2.500zM336 133h2.500v2.500h-2.500zM333.500 135.500h2.500v2.500h-2.500zM338.500 135.500h2.500v2.500h-2.500zM331 138h2.500v2.500h-2.500zM336 138h2.500v2.500h-2.500z" fill="#222"/><circle cx="336" cy="136" r="5.500" fill="none" stroke="#5285a6" stroke-width="1.200"/><circle cx="351" cy="135" r="2.800" fill="#dedede"/><rect x="349.800" y="138" width="2.400" height="3" fill="#dedede"/><path d="M351 130v1.200M346.500 132l1 1M355.500 132l-1 1M345.500 136h1.300M356.500 136h-1.300" stroke="#dedede" stroke-width="0.900"/><circle cx="368.500" cy="135.500" r="3.500" fill="#3cc0c8"/><path d="M361 139c2-2 3 0 5-1" stroke="#dedede" fill="none" stroke-width="1.200"/><circle cx="390.500" cy="134" r="3.800" fill="#dedede"/><rect x="388.500" y="136.500" width="4" height="3" fill="#dedede"/><path d="M386 141l4.500 1.500 4.500-1.500" stroke="#3cc0c8" fill="none"/><circle cx="404" cy="136" r="3" fill="#999"/><circle cx="408.500" cy="136" r="3.500" fill="#dedede"/><circle cx="422" cy="136" r="4.300" fill="none" stroke="#dedede" stroke-width="1.600" stroke-dasharray="5 1.500"/><path d="M422 131.700a4.300 4.300 0 0 1 0 8.600" fill="none" stroke="#3cc0c8" stroke-width="1.600"/><rect x="432" y="130" width="13" height="13" fill="#3a3a3a" stroke="#333"/><rect x="457.500" y="131.500" width="6" height="6" fill="none" stroke="#3cc0c8" stroke-dasharray="1.500 1"/><path d="M462 134v7l1.700-1.500 1.200 2.500 1.200-0.600-1.200-2.500 2.300-0.200z" fill="#dedede"/><rect x="484.500" y="131.500" width="6" height="6" fill="#dedede"/><rect x="481.500" y="134.500" width="6" height="6" fill="#dedede" stroke="#4b4b4b" stroke-width="0.800"/><rect x="500.500" y="131" width="6" height="6" fill="none" stroke="#3cc0c8" stroke-width="1.100"/><rect x="497.500" y="134.500" width="6" height="6" fill="#3cc0c8" stroke="#4b4b4b" stroke-width="0.600"/><rect x="513" y="131" width="10" height="10" fill="none" stroke="#dedede" stroke-width="1"/><path d="M515 133l3 1-2 2z" fill="#3cc0c8"/><circle cx="519.500" cy="137.500" r="1" fill="#dedede"/><path d="M539 130h-2v12h2M547 130h2v12h-2" stroke="#2ee02e" stroke-width="1.500" fill="none"/><circle cx="543" cy="136" r="3.800" fill="#dedede"/><circle cx="543" cy="136" r="1.400" fill="#4b4b4b"/><path d="M543 132.200v2.400M546.300 134.100l-2.100 1.200M546.300 137.900l-2.100-1.200M543 139.800v-2.400M539.700 137.900l2.100-1.200M539.700 134.100l2.100 1.200" stroke="#4b4b4b" stroke-width="0.700"/><path d="M588 130h-2v12h2M596 130h2v12h-2" stroke="#2ee02e" stroke-width="1.500" fill="none"/><rect x="588.500" y="131.500" width="7" height="9" fill="#dedede"/><path d="M593.500 132.500a3.500 3.500 0 0 0 0 7z" fill="#4b4b4b"/><circle cx="640.500" cy="136" r="4.800" fill="#49b8c8"/><path d="M636 136h9M640.500 131.200a7 7 0 0 0 0 9.600M640.500 131.200a7 7 0 0 1 0 9.600" stroke="#2a6a78" fill="none" stroke-width="0.700"/></svg>
<div class="fld" style="left:553px;top:129.500px;width:28px;height:13px"></div><span class="t" style="left:557px;top:132px;color:#eee;font-size:9px">0.00</span><div class="fld" style="left:602px;top:129.500px;width:29px;height:13px"></div><span class="t" style="left:606px;top:132px;color:#eee;font-size:9px">1.00</span><div class="a" style="left:650.500px;top:129.500px;width:98px;height:13px;background:#5d5d5d;border-radius:2px 0 0 2px"></div><div class="a" style="left:748.500px;top:129.500px;width:14px;height:13px;background:#666;border-radius:0 2px 2px 0"></div><span class="t" style="left:653px;top:132px;color:#eee;font-size:9px">sRGB gamma</span><svg style="left:751.500px;top:134px" width="8" height="5" viewBox="0 0 8 5"><path d="M0 0h8l-4 4.500z" fill="#d0d0d0"/></svg>
<svg style="left:36px;top:145px;overflow:hidden" width="1231" height="558" viewBox="36 145 1231 558">
<defs><linearGradient id="gb" x1="0" x2="1" y1="0" y2="0"><stop offset="0" stop-color="#7e7e7e"/><stop offset="0.180" stop-color="#989898"/><stop offset="0.450" stop-color="#acacac"/><stop offset="0.750" stop-color="#a6a6a6"/><stop offset="0.930" stop-color="#8c8c8c"/><stop offset="1" stop-color="#777"/></linearGradient><linearGradient id="gi" x1="0" x2="1" y1="0" y2="0"><stop offset="0" stop-color="#050505"/><stop offset="0.014" stop-color="#111"/><stop offset="0.060" stop-color="#5a5a5a"/><stop offset="0.140" stop-color="#888"/><stop offset="0.250" stop-color="#9a9a9a"/><stop offset="0.375" stop-color="#a2a2a2"/><stop offset="0.510" stop-color="#a4a4a4"/><stop offset="0.640" stop-color="#a1a1a1"/><stop offset="0.757" stop-color="#999"/><stop offset="0.863" stop-color="#8a8a8a"/><stop offset="0.938" stop-color="#666"/><stop offset="0.985" stop-color="#151515"/><stop offset="1" stop-color="#050505"/></linearGradient><clipPath id="low"><path d="M470 455L509 482L568 497V660H470zM717 480L736 466L748 458V530H850V600H717z"/></clipPath></defs>
<rect x="36" y="145" width="1232" height="558" fill="#676767"/>
<path d="M100.2 703.0L36.0 627.3M1152.2 703.0L1267.0 506.3M434.2 703.0L36.0 409.8M861.0 703.0L1267.0 310.4M766.8 703.0L36.0 311.4M568.9 703.0L1265.1 234.4M1098.1 703.0L36.0 255.3M275.6 703.0L1198.4 227.2M1267.0 647.0L87.4 236.9M36.0 580.2L1079.3 214.3M1267.0 492.4L214.5 221.0M36.0 507.7L1025.9 208.5M1267.0 441.9L270.0 214.1M36.0 452.6L976.2 203.2M1267.0 401.8L321.1 207.7M36.0 409.4L929.7 198.1M1267.0 369.3L368.1 201.8M36.0 374.5L886.1 193.4M1267.0 342.3L411.6 196.3M36.0 345.8L845.2 189.0M1267.0 319.6L452.0 191.3M36.0 321.8L806.7 184.8M1267.0 300.3L489.6 186.6M36.0 301.4L770.4 180.9M1267.0 283.5L524.6 182.2M36.0 283.9L736.1 177.2M1267.0 269.0L557.4 178.1M36.0 268.6L703.7 173.7M1267.0 256.1L588.0 174.2M36.0 255.2L673.0 170.4M1267.0 244.8L616.9 170.6M36.0 243.4L644.0 167.2M1267.0 234.6L644.0 167.2" stroke="#4f4f4f" stroke-width="1.150" fill="none"/>
<path d="M36.0 680.2L1136.6 220.5M1267.0 558.1L153.9 228.6" stroke="#3e3e3e" stroke-width="1.100" fill="none"/>
<polygon points="465.4,294.6 465.4,283.0 469.5,279.0 483.0,274.0 505.7,265.7 538.0,259.4 574.3,254.8 613.0,253.0 650.5,254.8 685.0,259.4 715.7,265.2 737.6,271.0 751.4,279.6 755.4,282.0 755.4,290.5 741.6,590.7 726.9,616.3 697.0,638.0 655.0,649.0 610.4,653.0 567.6,649.7 531.0,640.0 501.4,623.0 487.4,600.0" fill="url(#gb)"/>
<polygon points="465.4,283.0 469.5,279.0 483.0,274.0 505.7,265.7 538.0,259.4 574.3,254.8 613.0,253.0 650.5,254.8 685.0,259.4 715.7,265.2 737.6,271.0 751.4,279.6 755.4,282.0 755.4,290.5 737.6,301.5 706.0,308.3 661.5,316.0 609.7,321.7 557.0,320.0 512.0,314.0 481.0,304.0 465.4,294.6" fill="url(#gi)"/>
<path d="M465.4 294.6L487.4 600.0M481.0 304.0L501.4 623.0M512.0 314.0L531.0 640.0M557.0 320.0L567.6 649.7M609.7 321.7L610.4 653.0M661.5 316.0L655.0 649.0M706.0 308.3L697.0 638.0M737.6 301.5L726.9 616.3M755.4 290.5L741.6 590.7M470.6 366.7L485.8 379.3L516.5 390.9L559.5 397.8L609.9 399.9L660.0 394.6L703.9 386.1L735.1 375.8L752.1 361.3M472.6 394.2L487.7 408.0L518.2 420.3L560.5 427.5L609.9 429.7L659.4 424.6L703.1 415.8L734.1 404.1L750.9 388.4M481.6 519.1L496.0 538.5L526.0 553.6L564.8 562.3L610.2 565.2L656.7 560.8L699.4 550.6L729.7 532.9L745.3 511.1M483.0 539.5L497.4 559.8L527.2 575.5L565.5 584.4L610.3 587.4L656.3 583.1L698.8 572.7L729.0 554.0L744.3 531.3M487.4 600.0L501.4 623.0L531.0 640.0L567.6 649.7L610.4 653.0L655.0 649.0L697.0 638.0L726.9 616.3L741.6 590.7M483.0 274.0L485.5 301.5M505.7 265.7L509.8 309.5M538.0 259.4L541.0 316.0M574.3 254.8L575.5 319.0M613.0 253.0L613.0 320.5M650.5 254.8L650.5 316.5M685.0 259.4L686.0 311.0M715.7 265.2L715.5 305.5M737.6 271.0L738.0 300.0" stroke="#45eda6" stroke-width="1" fill="none" stroke-linejoin="round"/>
<polygon points="710.8,390.0 735.3,377.0 751.5,381.5 783.8,391.5 754.6,404.6" fill="#a3a3a3"/>
<polygon points="710.8,390.0 754.6,404.6 753.0,419.2 717.0,417.0" fill="#989898"/>
<polygon points="754.6,404.6 783.8,391.5 823.7,430.0 793.7,443.8" fill="#9f9f9f"/>
<polygon points="793.7,443.8 823.7,430.0 833.5,505.0 805.3,523.2" fill="#9a9a9a"/>
<polygon points="805.3,523.2 833.5,505.0 809.7,567.2 783.6,585.2" fill="#767676"/>
<polygon points="753.0,419.2 754.6,404.6 793.7,443.8 783.8,450.7" fill="#8e8e8e"/>
<polygon points="783.8,450.7 793.7,443.8 805.3,523.2 791.2,518.3" fill="#939393"/>
<polygon points="791.2,518.3 805.3,523.2 783.6,585.2 775.4,571.6 777.0,560.2" fill="#959595"/>
<polygon points="717.2,540.6 730.2,532.4 777.0,560.2 746.6,579.2 717.2,560.2" fill="#9c9c9c"/>
<polygon points="717.2,560.2 746.6,579.2 745.5,591.2 739.5,589.0 717.2,579.7" fill="#8f8f8f"/>
<polygon points="746.6,579.2 775.4,571.6 783.6,585.2 745.5,591.2" fill="#9a9a9a"/>
<polygon points="750.9,577.0 777.0,560.2 775.4,570.5" fill="#555"/>
<polygon points="730.2,532.4 744.4,516.0 744.4,541.0" fill="#7c7c7c"/>
<path d="M735.3 377.0L751.5 381.5L783.8 391.5L823.7 430.0L833.5 505.0L809.7 567.2L783.6 585.2L745.5 591.2L739.5 589.0L717.0 579.7M710.8 390.0L754.6 404.6L793.7 443.8L805.3 523.2L783.6 585.2M753.0 419.2L783.8 450.7L791.2 518.3L777.0 560.2L730.2 532.4M754.6 404.6L783.8 391.5M793.7 443.8L823.7 430.0M783.8 450.7L793.7 443.8M754.6 404.6L753.0 419.2M717.0 417.0L753.0 419.2M791.2 518.3L805.3 523.2L833.5 505.0M777.0 560.2L775.4 571.6L783.6 585.2M746.6 579.2L777.0 560.2M746.6 579.2L775.4 571.6M746.6 579.2L745.5 591.2M717.2 560.2L746.6 579.2M717.2 546.6L735.1 536.2M717.2 540.6L730.2 532.4L744.4 516.0M710.8 390.0L740.0 379.2" stroke="#45eda6" stroke-width="1" fill="none" stroke-linejoin="round"/>
<polygon points="465.4,283.0 469.5,279.0 483.0,274.0 505.7,265.7 538.0,259.4 574.3,254.8 613.0,253.0 650.5,254.8 685.0,259.4 715.7,265.2 737.6,271.0 751.4,279.6 755.4,282.0 755.4,290.5 737.6,301.5 706.0,308.3 661.5,316.0 609.7,321.7 557.0,320.0 512.0,314.0 481.0,304.0 465.4,294.6" fill="none" stroke="#45eda6" stroke-width="3.400" stroke-linejoin="round"/>
<polygon points="465.4,283.0 469.5,279.0 483.0,274.0 505.7,265.7 538.0,259.4 574.3,254.8 613.0,253.0 650.5,254.8 685.0,259.4 715.7,265.2 737.6,271.0 751.4,279.6 755.4,282.0 755.4,290.5 737.6,301.5 706.0,308.3 661.5,316.0 609.7,321.7 557.0,320.0 512.0,314.0 481.0,304.0 465.4,294.6" fill="none" stroke="#9c9c9c" stroke-width="1.300" stroke-linejoin="round"/>
<polyline points="467.0,296.5 481.0,306.5 512.0,316.5 557.0,322.5 609.7,324.2 661.5,318.5 706.0,310.8 737.6,304.0 754.0,292.5" fill="none" stroke="#45eda6" stroke-width="1" stroke-linejoin="round"/>
<g clip-path="url(#low)"><path d="M100.2 703.0L36.0 627.3M1152.2 703.0L1267.0 506.3M434.2 703.0L36.0 409.8M861.0 703.0L1267.0 310.4M766.8 703.0L36.0 311.4M568.9 703.0L1265.1 234.4M1098.1 703.0L36.0 255.3M275.6 703.0L1198.4 227.2M1267.0 647.0L87.4 236.9M36.0 580.2L1079.3 214.3M1267.0 492.4L214.5 221.0M36.0 507.7L1025.9 208.5M1267.0 441.9L270.0 214.1M36.0 452.6L976.2 203.2M1267.0 401.8L321.1 207.7M36.0 409.4L929.7 198.1M1267.0 369.3L368.1 201.8M36.0 374.5L886.1 193.4M1267.0 342.3L411.6 196.3M36.0 345.8L845.2 189.0M1267.0 319.6L452.0 191.3M36.0 321.8L806.7 184.8M1267.0 300.3L489.6 186.6M36.0 301.4L770.4 180.9M1267.0 283.5L524.6 182.2M36.0 283.9L736.1 177.2M1267.0 269.0L557.4 178.1M36.0 268.6L703.7 173.7M1267.0 256.1L588.0 174.2M36.0 255.2L673.0 170.4M1267.0 244.8L616.9 170.6M36.0 243.4L644.0 167.2M1267.0 234.6L644.0 167.2" stroke="#4a4a4a" stroke-width="1" fill="none"/><path d="M36.0 680.2L1136.6 220.5M1267.0 558.1L153.9 228.6" stroke="#333" stroke-width="1.200" fill="none"/></g>
<rect x="36" y="145" width="142" height="558" fill="#bcbcbc" fill-opacity="0.950"/><rect x="1125" y="145" width="142" height="558" fill="#b4b4b4" fill-opacity="0.940"/>
<path d="M178 145v558M1125 145v558" stroke="#6fcfae" stroke-width="0.800" stroke-dasharray="1 1"/>
<path d="M55.600 683v-12" stroke="#35d035" stroke-width="1.200"/><path d="M55.600 683l6.500 2.500" stroke="#e03030" stroke-width="1.200"/><path d="M55.600 683l-6.500 2.500" stroke="#3040e8" stroke-width="1.200"/><text x="53.500" y="670" font-size="6.500" font-weight="bold" fill="#35d035" font-family="Liberation Sans,sans-serif">y</text><text x="63.500" y="684.500" font-size="6.500" font-weight="bold" fill="#e03030" font-family="Liberation Sans,sans-serif">x</text><text x="45.500" y="684.500" font-size="6.500" font-weight="bold" fill="#3040e8" font-family="Liberation Sans,sans-serif">z</text>
</svg>
<span class="t" style="left:1090px;top:147px;font-size:7.2px;font-weight:bold;color:#fff">Backfaces:</span><span class="t" style="left:1196px;top:147px;font-size:7.2px;font-weight:bold;color:#fff">N/A</span>
<span class="t" style="left:1090px;top:162.5px;font-size:7.2px;font-weight:bold;color:#fff">Smoothness:</span><span class="t" style="left:1196px;top:162.5px;font-size:7.2px;font-weight:bold;color:#fff">N/A</span>
<span class="t" style="left:1090px;top:178px;font-size:7.2px;font-weight:bold;color:#fff">Instance:</span><span class="t" style="left:1196px;top:178px;font-size:7.2px;font-weight:bold;color:#fff">No</span>
<span class="t" style="left:1090px;top:194px;font-size:7.2px;font-weight:bold;color:#fff">Display Layer:</span><span class="t" style="left:1196px;top:194px;font-size:7.2px;font-weight:bold;color:#fff">default</span>
<span class="t" style="left:1090px;top:209.5px;font-size:7.2px;font-weight:bold;color:#fff">Distance From Camera:</span><span class="t" style="left:1196px;top:209.5px;font-size:7.2px;font-weight:bold;color:#fff">6.834</span>
<span class="t" style="left:1090px;top:225px;font-size:7.2px;font-weight:bold;color:#fff">Selected Objects:</span><span class="t" style="left:1196px;top:225px;font-size:7.2px;font-weight:bold;color:#fff">1</span>
<div class="a" style="left:1269px;top:113px;width:231px;height:592px;background:#4b4b4b"></div><div class="a" style="left:1274px;top:118.500px;width:42px;height:3px;border-top:1px dotted #6a6a6a;border-bottom:1px dotted #6a6a6a;box-sizing:border-box"></div><div class="a" style="left:1434px;top:118.500px;width:42px;height:3px;border-top:1px dotted #6a6a6a;border-bottom:1px dotted #6a6a6a;box-sizing:border-box"></div><span class="t" style="left:1325px;top:116px;color:#d6d6d6;font-size:8.5px">Channel Box / Layer Editor</span><svg style="left:1479px;top:115px" width="21" height="10" viewBox="0 0 21 10"><rect x="1.500" y="3" width="5" height="5" fill="none" stroke="#ddd"/><path d="M3.500 3v-2h5v5h-2" fill="none" stroke="#ddd"/><path d="M13.500 2l6 6M19.500 2l-6 6" stroke="#ddd" stroke-width="1.600"/></svg>
<svg style="left:1452px;top:128px" width="48" height="16" viewBox="0 0 48 16"><path d="M9 8v-5" stroke="#35e035" stroke-width="1.500"/><path d="M9 8l-5 2" stroke="#2a46e8" stroke-width="1.500"/><path d="M9 8l5 3" stroke="#e03030" stroke-width="1.500"/><path d="M9 1l2 3h-4z" fill="#35e035"/><circle cx="25" cy="8" r="5" fill="none" stroke="#3d6a48" stroke-width="1.200"/><path d="M38 13l7-9" stroke="#6a3636" stroke-width="1.500"/></svg>
<span class="t" style="left:1280.5px;top:148px;color:#e0e0e0;font-size:9.2px">Channels</span><span class="t" style="left:1330.5px;top:148px;color:#e0e0e0;font-size:9.2px">Edit</span><span class="t" style="left:1359px;top:148px;color:#e0e0e0;font-size:9.2px">Object</span><span class="t" style="left:1397.5px;top:148px;color:#e0e0e0;font-size:9.2px">Show</span>
<span class="t cb" style="left:1276px;top:164px;color:#e8e8e8;font-size:8.5px;font-weight:bold">pCylinder1</span>
<span class="t cb" style="right:53px;top:176.5px;color:#ddd;font-size:8.7px">Translate X</span><div class="a" style="left:1450px;top:175px;width:50px;height:12px;background:#313131"></div><span class="t" style="left:1453px;top:176.5px;color:#eee;font-size:9.2px">0</span>
<span class="t cb" style="right:53px;top:189px;color:#ddd;font-size:8.7px">Translate Y</span><div class="a" style="left:1450px;top:187.5px;width:50px;height:12px;background:#313131"></div><span class="t" style="left:1453px;top:189px;color:#eee;font-size:9.2px">0.008</span>
<span class="t cb" style="right:53px;top:201.5px;color:#ddd;font-size:8.7px">Translate Z</span><div class="a" style="left:1450px;top:200px;width:50px;height:12px;background:#313131"></div><span class="t" style="left:1453px;top:201.5px;color:#eee;font-size:9.2px">1.269</span>
<span class="t cb" style="right:53px;top:214px;color:#ddd;font-size:8.7px">Rotate X</span><div class="a" style="left:1450px;top:212.5px;width:50px;height:12px;background:#313131"></div><span class="t" style="left:1453px;top:214px;color:#eee;font-size:9.2px">0</span>
<span class="t cb" style="right:53px;top:226.5px;color:#ddd;font-size:8.7px">Rotate Y</span><div class="a" style="left:1450px;top:225px;width:50px;height:12px;background:#313131"></div><span class="t" style="left:1453px;top:226.5px;color:#eee;font-size:9.2px">8</span>
<span class="t cb" style="right:53px;top:239px;color:#ddd;font-size:8.7px">Rotate Z</span><div class="a" style="left:1450px;top:237.5px;width:50px;height:12px;background:#313131"></div><span class="t" style="left:1453px;top:239px;color:#eee;font-size:9.2px">0</span>
<span class="t cb" style="right:53px;top:251.5px;color:#ddd;font-size:8.7px">Scale X</span><div class="a" style="left:1450px;top:250px;width:50px;height:12px;background:#313131"></div><span class="t" style="left:1453px;top:251.5px;color:#eee;font-size:9.2px">1</span>
<span class="t cb" style="right:53px;top:264px;color:#ddd;font-size:8.7px">Scale Y</span><div class="a" style="left:1450px;top:262.5px;width:50px;height:12px;background:#313131"></div><span class="t" style="left:1453px;top:264px;color:#eee;font-size:9.2px">1</span>
<span class="t cb" style="right:53px;top:276.5px;color:#ddd;font-size:8.7px">Scale Z</span><div class="a" style="left:1450px;top:275px;width:50px;height:12px;background:#313131"></div><span class="t" style="left:1453px;top:276.5px;color:#eee;font-size:9.2px">1</span>
<span class="t cb" style="right:53px;top:289px;color:#ddd;font-size:8.7px">Visibility</span><div class="a" style="left:1450px;top:287.5px;width:50px;height:12px;background:#313131"></div><span class="t" style="left:1453px;top:289px;color:#eee;font-size:9.2px">on</span>
<span class="t cb" style="left:1276px;top:302px;color:#ddd;font-size:8.6px;font-weight:bold">SHAPES</span><div class="a" style="left:1275px;top:313px;width:225px;height:12.500px;background:#414141"></div><span class="t cb" style="left:1283px;top:315px;color:#eee;font-size:8.6px;font-weight:bold">pCylinderShape1</span><span class="t cb" style="left:1276px;top:327.500px;color:#ddd;font-size:8.6px;font-weight:bold">INPUTS</span>
<span class="t cb" style="left:1283px;top:340px;color:#ddd;font-size:8.6px;font-weight:bold">layer1</span><span class="t cb" style="left:1283px;top:352.5px;color:#ddd;font-size:8.6px;font-weight:bold">renderLayerManager</span><span class="t cb" style="left:1283px;top:365px;color:#ddd;font-size:8.6px;font-weight:bold">polyMapDel2</span><span class="t cb" style="left:1283px;top:377.5px;color:#ddd;font-size:8.6px;font-weight:bold">polyTweakUV1</span><span class="t cb" style="left:1283px;top:390px;color:#ddd;font-size:8.6px;font-weight:bold">polyCylProj1</span><span class="t cb" style="left:1283px;top:402.5px;color:#ddd;font-size:8.6px;font-weight:bold">polyMapDel1</span><span class="t cb" style="left:1283px;top:415px;color:#ddd;font-size:8.6px;font-weight:bold">polySplitRing2</span><span class="t cb" style="left:1283px;top:427.5px;color:#ddd;font-size:8.6px;font-weight:bold">polySplitRing1</span>
<div class="a" style="left:1275px;top:450px;width:225px;height:111px;background:#303030"></div><div class="a" style="left:1275px;top:570px;width:49px;height:16px;background:#434343;border-left:1px solid #393939;box-sizing:border-box"></div><span class="t" style="left:1284px;top:574px;color:#c8c8c8;font-size:9.2px">Display</span><div class="a" style="left:1324px;top:570px;width:48px;height:16px;background:#6c6c6c;border-left:1px solid #393939;box-sizing:border-box"></div><span class="t" style="left:1333px;top:574px;color:#fff;font-size:9.2px">Render</span><div class="a" style="left:1372px;top:570px;width:40px;height:16px;background:#434343;border-left:1px solid #393939;box-sizing:border-box"></div><span class="t" style="left:1382px;top:574px;color:#c8c8c8;font-size:9.2px">Anim</span>
<div class="a" style="left:1274px;top:586px;width:226px;height:118px;border:1px solid #3a3a3a;border-right:none;box-sizing:border-box;background:#4b4b4b"></div><span class="t" style="left:1283px;top:591px;color:#e0e0e0;font-size:9.2px">Layers</span><span class="t" style="left:1321px;top:591px;color:#e0e0e0;font-size:9.2px">Contribution</span><span class="t" style="left:1386px;top:591px;color:#e0e0e0;font-size:9.2px">Options</span><span class="t" style="left:1431px;top:591px;color:#e0e0e0;font-size:9.2px">Help</span>
<div class="a" style="left:1279.500px;top:608px;width:110px;height:14px;background:#5d5d5d;border-radius:2px 0 0 2px"></div><div class="a" style="left:1389.500px;top:608px;width:15.500px;height:14px;background:#686868;border-radius:0 2px 2px 0"></div><span class="t" style="left:1282px;top:610.500px;color:#f0f0f0;font-size:9.2px">Normal</span><svg style="left:1393.500px;top:613px" width="8" height="5" viewBox="0 0 8 5"><path d="M0 0h8l-4 4.500z" fill="#d0d0d0"/></svg>
<svg style="left:1420px;top:605.500px" width="80" height="16" viewBox="1420 604 80 16"><path d="M1425 612l5-3.500 3 1.500v4l-3 1.500z" fill="#e0e0e0"/><path d="M1435 608v6M1433 610l2-2.500 2 2.500" stroke="#40c0d8" stroke-width="1.400" fill="none"/><path d="M1443 612l5-3.500 3 1.500v4l-3 1.500z" fill="#e0e0e0"/><path d="M1453 608v6M1451 612l2 2.500 2-2.500" stroke="#40c0d8" stroke-width="1.400" fill="none"/><path d="M1463 612l5-3.500 3 1.500v4l-3 1.500z" fill="#e0e0e0"/><path d="M1473 606v4M1471 608h4" stroke="#40c0d8" stroke-width="1.300"/><path d="M1482 612l5-3.500 3 1.500v4l-3 1.500z" fill="#e0e0e0"/><circle cx="1491.500" cy="608.500" r="2.500" fill="#40c0d8"/></svg>
<div class="a" style="left:1277px;top:625px;width:221px;height:76px;background:#303030"></div><div class="a" style="left:1277px;top:640.500px;width:221px;height:15.500px;background:#5b8ebd"></div><svg style="left:1279px;top:626px" width="18" height="14.500" viewBox="0 0 18 14.500"><rect width="17.2" height="14.500" fill="#161616"/><rect x="4" y="5.500" width="9" height="5.500" fill="#f0f0f0"/><path d="M4 3.600h9" stroke="#f0f0f0" stroke-width="1.700" stroke-dasharray="1.400 0.900"/></svg><svg style="left:1297px;top:626px" width="18.5" height="14.500" viewBox="0 0 18.5 14.500"><rect width="17.7" height="14.500" fill="#585858"/><circle cx="8.500" cy="7.300" r="3" fill="none" stroke="#e03a3a" stroke-width="1.500" stroke-dasharray="3.500 1.200"/></svg><svg style="left:1315.5px;top:626px" width="17.5" height="14.500" viewBox="0 0 17.5 14.500"><rect width="16.7" height="14.500" fill="#585858"/><rect x="4" y="5.500" width="9" height="5.500" fill="#e8d838"/><path d="M4 3.600h9" stroke="#e8d838" stroke-width="1.700" stroke-dasharray="1.400 0.900"/><circle cx="5" cy="3.800" r="1.300" fill="none" stroke="#e8d838" stroke-width="0.700"/></svg><svg style="left:1279px;top:640.8px" width="18" height="14.500" viewBox="0 0 18 14.500"><rect width="17.2" height="14.500" fill="#686868"/><rect x="4" y="5.500" width="9" height="5.500" fill="#e8e8e8"/><path d="M4 3.600h9" stroke="#e8e8e8" stroke-width="1.700" stroke-dasharray="1.400 0.900"/><path d="M10 10l3 0" stroke="#e8d838" stroke-width="1.500"/></svg><svg style="left:1297px;top:640.8px" width="18.5" height="14.500" viewBox="0 0 18.5 14.500"><rect width="17.7" height="14.500" fill="#686868"/><circle cx="8.500" cy="7.300" r="3" fill="none" stroke="#e03a3a" stroke-width="1.500" stroke-dasharray="3.500 1.200"/></svg><svg style="left:1315.5px;top:640.8px" width="17.5" height="14.500" viewBox="0 0 17.5 14.500"><rect width="16.7" height="14.500" fill="#686868"/><rect x="4" y="5.500" width="9" height="5.500" fill="#e8e8e8"/><path d="M4 3.600h9" stroke="#e8e8e8" stroke-width="1.700" stroke-dasharray="1.400 0.900"/><circle cx="5" cy="3.800" r="1.300" fill="none" stroke="#e8e8e8" stroke-width="0.700"/></svg>
<span class="t" style="left:1347px;top:631px;color:#f2f2f2;font-size:8.8px;font-weight:bold">layer1 (Normal)</span><span class="t" style="left:1347px;top:646.500px;color:#b4cde4;font-size:8.8px;font-weight:bold">masterLayer (Normal)</span>
<div class="a" style="left:0;top:704px;width:1500px;height:77px;background:#4b4b4b"></div><div class="a" style="left:0;top:703.500px;width:1268px;height:2.500px;background:#414141"></div><div class="grip" style="left:4px;top:708px;height:20px"></div><div class="grip" style="left:4px;top:737px;height:17px"></div><div class="grip" style="left:4px;top:762px;height:17px"></div><div class="a" style="left:13px;top:706px;width:1273px;height:23px;background:#333;overflow:hidden"></div><div class="a" style="left:20px;top:707px;width:9px;height:22px;background:#6e6e6e"></div><span class="t" style="left:22px;top:719.500px;color:#fff;font-size:8.5px">1</span><svg style="left:13px;top:706px" width="1266" height="23" viewBox="13 706 1266 23"><path d="M62.0 718v11M114.6 718v11M167.2 718v11M219.8 718v11M272.3 718v11M324.9 718v11M377.5 718v11M430.1 718v11M482.7 718v11M535.3 718v11M587.9 718v11M640.4 718v11M693.0 718v11M745.6 718v11M798.2 718v11M850.8 718v11M903.4 718v11M955.9 718v11M1008.5 718v11M1061.1 718v11M1113.7 718v11M1166.3 718v11M1218.9 718v11M1271.5 718v11" stroke="#c8c8c8" stroke-width="1"/></svg><div class="a" style="left:13px;top:706px;width:1273px;height:23px;overflow:hidden"><span class="t" style="left:50.2px;top:1.500px;color:#b4b4b4;font-size:8.8px">5</span><span class="t" style="left:102.8px;top:1.500px;color:#b4b4b4;font-size:8.8px">10</span><span class="t" style="left:155.4px;top:1.500px;color:#b4b4b4;font-size:8.8px">15</span><span class="t" style="left:208.0px;top:1.500px;color:#b4b4b4;font-size:8.8px">20</span><span class="t" style="left:260.5px;top:1.500px;color:#b4b4b4;font-size:8.8px">25</span><span class="t" style="left:313.1px;top:1.500px;color:#b4b4b4;font-size:8.8px">30</span><span class="t" style="left:365.7px;top:1.500px;color:#b4b4b4;font-size:8.8px">35</span><span class="t" style="left:418.3px;top:1.500px;color:#b4b4b4;font-size:8.8px">40</span><span class="t" style="left:470.9px;top:1.500px;color:#b4b4b4;font-size:8.8px">45</span><span class="t" style="left:523.5px;top:1.500px;color:#b4b4b4;font-size:8.8px">50</span><span class="t" style="left:576.1px;top:1.500px;color:#b4b4b4;font-size:8.8px">55</span><span class="t" style="left:628.6px;top:1.500px;color:#b4b4b4;font-size:8.8px">60</span><span class="t" style="left:681.2px;top:1.500px;color:#b4b4b4;font-size:8.8px">65</span><span class="t" style="left:733.8px;top:1.500px;color:#b4b4b4;font-size:8.8px">70</span><span class="t" style="left:786.4px;top:1.500px;color:#b4b4b4;font-size:8.8px">75</span><span class="t" style="left:839.0px;top:1.500px;color:#b4b4b4;font-size:8.8px">80</span><span class="t" style="left:891.6px;top:1.500px;color:#b4b4b4;font-size:8.8px">85</span><span class="t" style="left:944.1px;top:1.500px;color:#b4b4b4;font-size:8.8px">90</span><span class="t" style="left:996.7px;top:1.500px;color:#b4b4b4;font-size:8.8px">95</span><span class="t" style="left:1049.3px;top:1.500px;color:#b4b4b4;font-size:8.8px">100</span><span class="t" style="left:1101.9px;top:1.500px;color:#b4b4b4;font-size:8.8px">105</span><span class="t" style="left:1154.5px;top:1.500px;color:#b4b4b4;font-size:8.8px">110</span><span class="t" style="left:1207.1px;top:1.500px;color:#b4b4b4;font-size:8.8px">115</span><span class="t" style="left:1259.7px;top:1.500px;color:#b4b4b4;font-size:8.8px">120</span></div>
<div class="fld" style="left:1292.500px;top:712px;width:53px;height:14px"></div><span class="t" style="left:1297px;top:714.500px;color:#eee;font-size:9px">1</span>
<svg style="left:1350px;top:709px" width="150" height="20" viewBox="1350 709 150 20" fill="#d8d8d8"><path d="M1354 713.500h1.600v10h-1.600zM1361 713.500v10l-5-5zM1366 713.500v10l-5-5z"/><path d="M1372.500 713.500h1.600v10h-1.600zM1382 713.500v10l-6.500-5z"/><path d="M1390.500 712h1.800v13h-1.800z" fill="#e8852a"/><path d="M1400 713.500v10l-6.500-5z"/><path d="M1418 712.500v12l-9-6z"/><path d="M1427 712.500v12l9-6z"/><path d="M1444.500 713.500v10l6.500-5z"/><path d="M1452 712h1.800v13h-1.800z" fill="#e8852a"/><path d="M1462.500 713.500v10l6.500-5zM1470.500 713.500h1.600v10h-1.600z"/><path d="M1479 713.500v10l5-5zM1484 713.500v10l5-5zM1489.500 713.500h1.600v10h-1.600z"/></svg>
<div class="fld" style="left:14px;top:737px;width:53px;height:16px"></div><span class="t" style="left:18px;top:741.700px;color:#eee;font-size:9px">1</span><div class="fld" style="left:74px;top:737px;width:53px;height:16px"></div><span class="t" style="left:78px;top:741.700px;color:#eee;font-size:9px">1</span><div class="a" style="left:133px;top:736px;width:1000px;height:18px;background:#535353;border-radius:2px"></div><div class="a" style="left:136px;top:737.500px;width:607px;height:15px;background:#656565;border-radius:3px"></div><div class="a" style="left:140px;top:740px;width:9px;height:9px;background:#8c8c8c;border-radius:2px"></div><span class="t" style="left:153px;top:741.700px;color:#eee;font-size:9px">1</span><span class="t" style="left:712px;top:741.700px;color:#eee;font-size:9px">120</span><div class="a" style="left:728.500px;top:740px;width:9px;height:9px;background:#8c8c8c;border-radius:2px"></div>
<div class="fld" style="left:1139.500px;top:737px;width:53px;height:16px"></div><span class="t" style="left:1143px;top:741.700px;color:#eee;font-size:9px">120</span><div class="fld" style="left:1199px;top:737px;width:53px;height:16px"></div><span class="t" style="left:1203px;top:741.700px;color:#eee;font-size:9px">200</span><svg style="left:1255.500px;top:740px" width="8" height="5" viewBox="0 0 8 5"><path d="M0.500 0.500h7l-3.500 4z" fill="#5a5a5a" stroke="#777" stroke-width="0.600"/></svg><div class="a" style="left:1270px;top:737px;width:78px;height:16px;background:#4a4a4a;border:1px solid #393939;box-sizing:border-box;border-radius:2px"></div><span class="t" style="left:1273.500px;top:741.700px;color:#eee;font-size:9px">No Anim Layer</span><svg style="left:1356.500px;top:740px" width="8" height="5" viewBox="0 0 8 5"><path d="M0.500 0.500h7l-3.500 4z" fill="#5a5a5a" stroke="#777" stroke-width="0.600"/></svg><div class="a" style="left:1370.500px;top:737px;width:79px;height:16px;background:#4a4a4a;border:1px solid #393939;box-sizing:border-box;border-radius:2px"></div><span class="t" style="left:1374.500px;top:741.700px;color:#eee;font-size:9px">No Character Set</span><svg style="left:1454px;top:735px" width="46" height="20" viewBox="1454 735 46 20"><circle cx="1463" cy="745" r="5" fill="none" stroke="#d8d8d8" stroke-width="1.200" stroke-dasharray="6 2"/><path d="M1463 741.500v4.500" stroke="#e8852a" stroke-width="1.600"/><circle cx="1463" cy="748" r="0.900" fill="#e8852a"/><circle cx="1481.500" cy="739.500" r="1.800" fill="none" stroke="#d8d8d8"/><circle cx="1488.500" cy="740" r="1.600" fill="#e8852a"/><path d="M1488 742l-3 3 2 1M1488 742l2 3 2 0.500M1487.500 746l-2.500 5M1487.500 746l2 2 1.500 3" stroke="#e8852a" stroke-width="1.400" fill="none"/></svg>
<span class="t" style="left:22px;top:766.500px;color:#f0f0f0;font-size:9px;-webkit-text-stroke:0.2px #f0f0f0">MEL</span><div class="a" style="left:50px;top:761.500px;width:326px;height:17.500px;border-radius:2px;background:#303030"></div><div class="a" style="left:382px;top:761.500px;width:1095px;height:17.500px;border-radius:2px;background:#303030"></div><svg style="left:1481px;top:763px" width="14" height="15" viewBox="0 0 14 15"><rect x="0.500" y="0.500" width="13" height="14" fill="#d8d8d8"/><path d="M1 2.800h12" stroke="#4b4b4b" stroke-width="0.800"/><text x="2.300" y="12" font-size="8" font-weight="bold" fill="#3a3a3a" font-family="Liberation Sans,sans-serif">{;}</text></svg>
<div class="mm" style="left:612.5px;top:293px;width:61px">Edge</div><div class="mm" style="left:673px;top:313.5px;width:94.5px">Object Mode</div><div class="mm" style="left:531px;top:336px;width:70px">Vertex</div><div class="mm" style="left:686px;top:336px;width:53px"><span style="margin-right:4px">UV</span><svg style="left:42px;top:4px" width="4" height="7" viewBox="0 0 4 7"><path d="M0 0l4 3.500-4 3.500z" fill="#f2f2f2"/></svg></div><div class="mm" style="left:523.5px;top:359px;width:89.5px">Vertex Face</div><div class="mm" style="left:673px;top:359px;width:63px">Multi</div><div class="mm" style="left:613px;top:379.5px;width:59.5px">Face</div><div class="a" style="left:638px;top:339.500px;width:9px;height:9px;border-radius:50%;background:#8a8a8a;border:1px solid #2a2a2a;box-sizing:border-box"></div>
<div class="a" style="left:568px;top:412px;width:148.500px;height:372px;background:#575757;border:1px solid #1e1e1e;box-sizing:border-box"></div>
<span class="t cm" style="left:588.500px;top:416.5px">pCylinder1...</span>
<div class="a" style="left:569px;top:429px;width:146.500px;height:1px;background:#707070"></div><span class="t cm" style="left:588.500px;top:435.5px">Select</span>
<span class="t cm" style="left:588.500px;top:451px">Select All</span>
<span class="t cm" style="left:588.500px;top:466.5px">Deselect All</span>
<span class="t cm" style="left:588.500px;top:482.5px">Select Hierarchy</span>
<span class="t cm" style="left:588.500px;top:498.5px">Invert Selection</span>
<div class="a" style="left:569px;top:512px;width:146.500px;height:1px;background:#707070"></div><span class="t cm" style="left:588.500px;top:518px">Select Similar</span><div class="a" style="left:703.500px;top:518px;width:8px;height:8px;border:1px solid #c8c8c8;box-sizing:border-box"></div>
<div class="a" style="left:569px;top:531.5px;width:146.500px;height:1px;background:#707070"></div><span class="t cm" style="left:588.500px;top:537.5px">Make Live</span>
<div class="a" style="left:569px;top:551px;width:146.500px;height:1px;background:#707070"></div><span class="t cm" style="left:588.500px;top:557px">DG Traversal</span><svg style="left:705px;top:557px" width="4" height="7" viewBox="0 0 4 7"><path d="M0 0l4 3.500-4 3.500z" fill="#f2f2f2"/></svg>
<span class="t cm" style="left:588.500px;top:572.5px">Inputs</span><svg style="left:705px;top:572.5px" width="4" height="7" viewBox="0 0 4 7"><path d="M0 0l4 3.500-4 3.500z" fill="#f2f2f2"/></svg>
<span class="t cm" style="left:588.500px;top:588.5px">Outputs</span><svg style="left:705px;top:588.5px" width="4" height="7" viewBox="0 0 4 7"><path d="M0 0l4 3.500-4 3.500z" fill="#f2f2f2"/></svg>
<span class="t cm" style="left:588.500px;top:604px">Paint</span><svg style="left:705px;top:604px" width="4" height="7" viewBox="0 0 4 7"><path d="M0 0l4 3.500-4 3.500z" fill="#f2f2f2"/></svg>
<span class="t cm" style="left:588.500px;top:619.5px">Metadata</span><svg style="left:705px;top:619.5px" width="4" height="7" viewBox="0 0 4 7"><path d="M0 0l4 3.500-4 3.500z" fill="#f2f2f2"/></svg>
<span class="t cm" style="left:588.500px;top:635.5px">Actions</span><svg style="left:705px;top:635.5px" width="4" height="7" viewBox="0 0 4 7"><path d="M0 0l4 3.500-4 3.500z" fill="#f2f2f2"/></svg>
<span class="t cm" style="left:588.500px;top:651px">UV Sets</span><svg style="left:705px;top:651px" width="4" height="7" viewBox="0 0 4 7"><path d="M0 0l4 3.500-4 3.500z" fill="#f2f2f2"/></svg>
<span class="t cm" style="left:588.500px;top:666.5px">Color Sets</span><svg style="left:705px;top:666.5px" width="4" height="7" viewBox="0 0 4 7"><path d="M0 0l4 3.500-4 3.500z" fill="#f2f2f2"/></svg>
<div class="a" style="left:569px;top:680.5px;width:146.500px;height:1px;background:#707070"></div><span class="t cm" style="left:588.500px;top:686px">Material Attributes...</span>
<div class="a" style="left:569px;top:702.500px;width:146.500px;height:16px;background:#5a8fb5"></div><span class="t cm" style="left:588.500px;top:706px">Assign New Material...</span>
<span class="t cm" style="left:588.500px;top:721.5px">Assign Favorite Material</span><svg style="left:705px;top:721.5px" width="4" height="7" viewBox="0 0 4 7"><path d="M0 0l4 3.500-4 3.500z" fill="#f2f2f2"/></svg>
<span class="t cm" style="left:588.500px;top:737.5px">Assign Existing Material</span><svg style="left:705px;top:737.5px" width="4" height="7" viewBox="0 0 4 7"><path d="M0 0l4 3.500-4 3.500z" fill="#f2f2f2"/></svg>
<div class="a" style="left:569px;top:751px;width:146.500px;height:1px;background:#707070"></div><span class="t cm" style="left:588.500px;top:756.5px">Remove Material Override</span><svg style="left:705px;top:756.5px" width="4" height="7" viewBox="0 0 4 7"><path d="M0 0l4 3.500-4 3.500z" fill="#f2f2f2"/></svg>
<span class="t cm" style="left:588.500px;top:772px">Baking</span><svg style="left:705px;top:772px" width="4" height="7" viewBox="0 0 4 7"><path d="M0 0l4 3.500-4 3.500z" fill="#f2f2f2"/></svg>
<svg style="left:566px;top:616px" width="154" height="16" viewBox="566 616 154 16"><path d="M572 617.500h-3.500v13h3.500M713.500 617.500h3.500v13h-3.500" stroke="#2ee02e" stroke-width="1.600" fill="none"/></svg>
<div class="a" style="left:559px;top:693.500px;width:169px;height:31.500px;border:solid #f80d14;border-width:7px 6px;box-sizing:border-box"></div>
</body></html>
